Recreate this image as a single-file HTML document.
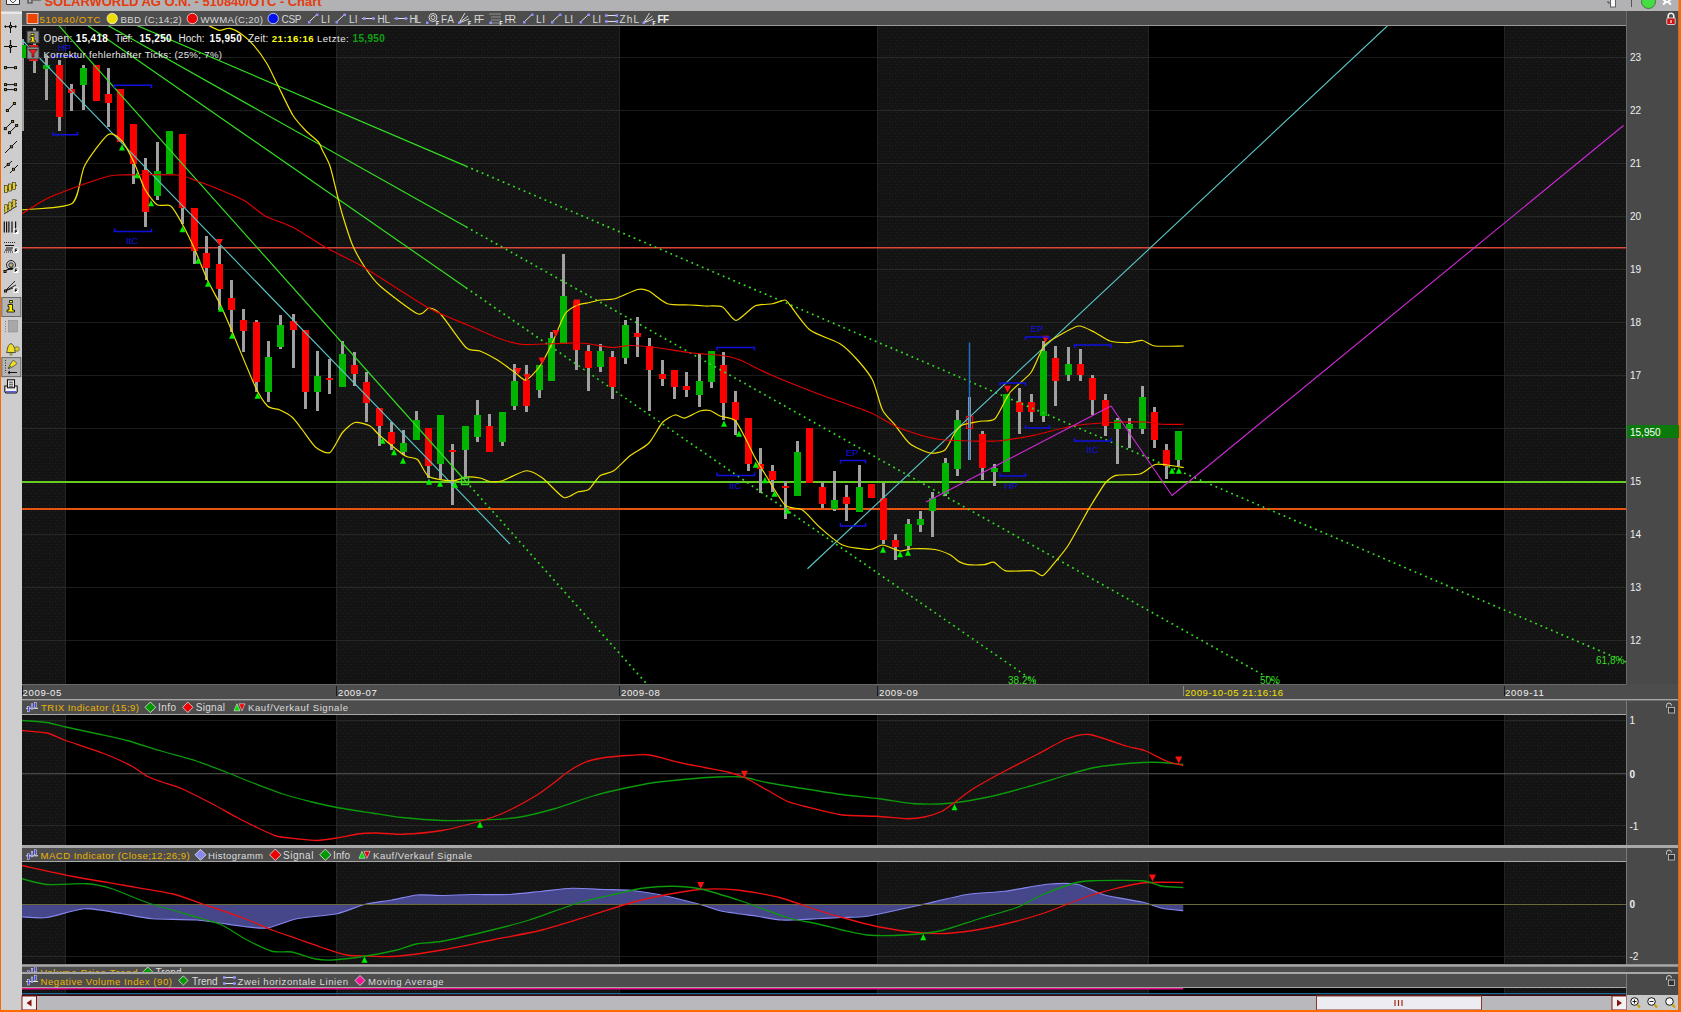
<!DOCTYPE html>
<html><head><meta charset="utf-8"><style>
html,body{margin:0;padding:0;background:#000;width:1681px;height:1012px;overflow:hidden}
svg text{font-family:"Liberation Sans",sans-serif}
</style></head><body>
<svg width="1681" height="1012" viewBox="0 0 1681 1012" style="display:block" font-family="Liberation Sans, sans-serif">
<defs><pattern id="dots" width="6" height="6" patternUnits="userSpaceOnUse"><rect width="6" height="6" fill="#131313"/><rect x="1" y="1" width="1" height="1" fill="#1e261e"/><rect x="4" y="1" width="1" height="1" fill="#1e1a20"/><rect x="2.5" y="4" width="1" height="1" fill="#1e261e"/><rect x="5.5" y="4" width="1" height="1" fill="#1e1a20"/></pattern><clipPath id="mainclip"><rect x="22" y="26" width="1604" height="658"/></clipPath><clipPath id="trixclip"><rect x="22" y="715" width="1604" height="130"/></clipPath><clipPath id="macdclip"><rect x="22" y="862" width="1604" height="102.3"/></clipPath></defs>
<rect x="0" y="0" width="1681" height="1012" fill="#7a7a7a" />
<rect x="0" y="0" width="1681" height="11" fill="#b2b2b4" />
<rect x="0" y="11" width="22" height="1001" fill="#cdcdcd" />
<rect x="0" y="0" width="1" height="1012" fill="#ff6a00" />
<rect x="1678.6" y="0" width="2.4" height="1012" fill="#ff6a00" />
<text x="44.5" y="5.5" fill="#e23c10" font-size="13" font-weight="bold" textLength="277" lengthAdjust="spacing">SOLARWORLD AG O.N. - 510840/OTC - Chart</text>
<path d="M6.5 -1 V4.5 H19.5 V-1" fill="#f4f4f4" stroke="#333" stroke-width="1"/>
<path d="M10 0 L13 3 L16 0" fill="none" stroke="#555" stroke-width="1"/>
<path d="M28 -1 V3 H32 V-1 M33 0 H41" fill="none" stroke="#444" stroke-width="1.2"/>
<rect x="1610.5" y="-1" width="5" height="8" fill="#f8f8f8" stroke="#444" stroke-width="0.8"/>
<path d="M1608 1 L1608 3 L1610 3" fill="none" stroke="#333" stroke-width="0.8"/>
<rect x="1631" y="0" width="1" height="7" fill="#555" />
<circle cx="1648.5" cy="1.5" r="7" fill="#44dd44" stroke="#2a6a2a" stroke-width="0.8"/>
<path d="M1663 -1 L1666 2 L1663 4.5 M1671 -1 L1668 2 L1671 4.5" fill="none" stroke="#fff" stroke-width="2"/>
<rect x="22" y="11" width="1604" height="14" fill="#4d4d4d" />
<rect x="22" y="25" width="1604" height="1" fill="#9a9a9a" />
<rect x="27" y="13.5" width="11" height="10" fill="#ee4400" stroke="#fff" stroke-width="0.7"/>
<text x="39.6" y="22.5" fill="#f0a800" font-size="9.6" font-weight="normal" textLength="60.8" lengthAdjust="spacing">510840/OTC</text>
<circle cx="112.2" cy="18.5" r="5.2" fill="#eedd00" stroke="#fff" stroke-width="0.7"/>
<text x="120.4" y="22.5" fill="#d8d8d8" font-size="9.6" font-weight="normal" textLength="61.2" lengthAdjust="spacing">BBD (C;14;2)</text>
<circle cx="192.3" cy="18.5" r="5.2" fill="#ee0000" stroke="#fff" stroke-width="0.7"/>
<text x="200.4" y="22.5" fill="#d8d8d8" font-size="9.6" font-weight="normal" textLength="62.5" lengthAdjust="spacing">WWMA(C;20)</text>
<circle cx="273.2" cy="18.5" r="5.2" fill="#0010ee" stroke="#fff" stroke-width="0.7"/>
<text x="281.6" y="22.5" fill="#d8d8d8" font-size="10" font-weight="normal" textLength="19.7" lengthAdjust="spacing">CSP</text>
<path d="M308.9 22 L316.9 14.5" stroke="#e0e0e0" stroke-width="1"/>
<rect x="307.9" y="21" width="2.5" height="2.5" fill="#9090ff" />
<rect x="315.9" y="13.5" width="2.5" height="2.5" fill="#9090ff" />
<path d="M336.5 22 L344.5 14.5" stroke="#e0e0e0" stroke-width="1"/>
<rect x="335.5" y="21" width="2.5" height="2.5" fill="#9090ff" />
<rect x="343.5" y="13.5" width="2.5" height="2.5" fill="#9090ff" />
<text x="321" y="22.5" fill="#d8d8d8" font-size="10" font-weight="normal" textLength="9" lengthAdjust="spacing">LI</text>
<text x="349" y="22.5" fill="#d8d8d8" font-size="10" font-weight="normal" textLength="8.5" lengthAdjust="spacing">LI</text>
<path d="M362 18.5 H375" stroke="#e0e0e0" stroke-width="1"/>
<rect x="363" y="17.2" width="2.6" height="2.6" fill="#9090ff" />
<rect x="372" y="17.2" width="2.6" height="2.6" fill="#9090ff" />
<text x="377.5" y="22.5" fill="#d8d8d8" font-size="10" font-weight="normal" textLength="12.5" lengthAdjust="spacing">HL</text>
<path d="M394.5 18.5 H407.5" stroke="#e0e0e0" stroke-width="1"/>
<rect x="395.5" y="17.2" width="2.6" height="2.6" fill="#9090ff" />
<rect x="404.5" y="17.2" width="2.6" height="2.6" fill="#9090ff" />
<text x="409.5" y="22.5" fill="#d8d8d8" font-size="10" font-weight="normal" textLength="11.5" lengthAdjust="spacing">HL</text>
<circle cx="433" cy="17.5" r="4" fill="none" stroke="#d8d8d8" stroke-width="1"/><circle cx="433" cy="17.5" r="2" fill="none" stroke="#d8d8d8" stroke-width="1"/>
<rect x="426" y="21.5" width="2.5" height="2.5" fill="#9090ff" />
<text x="436" y="24.5" fill="#ffffff" font-size="5" font-weight="bold" textLength="3.5" lengthAdjust="spacing">F</text>
<text x="441" y="22.5" fill="#d8d8d8" font-size="10" font-weight="normal" textLength="13" lengthAdjust="spacing">FA</text>
<path d="M459 23 L465 13 M459 23 L468 16 M459 23 L469 19" stroke="#d8d8d8" stroke-width="1"/>
<rect x="458" y="21.5" width="2.5" height="2.5" fill="#9090ff" />
<text x="468" y="24.5" fill="#ffffff" font-size="5" font-weight="bold" textLength="3.5" lengthAdjust="spacing">F</text>
<text x="474" y="22.5" fill="#d8d8d8" font-size="10" font-weight="normal" textLength="10" lengthAdjust="spacing">FF</text>
<path d="M489.5 14 H501.5 M491.5 17 H500.5 M491.5 20 H500.5 M489.5 23 H501.5" stroke="#d8d8d8" stroke-width="1" stroke-dasharray="1,1"/>
<rect x="489.5" y="21.5" width="2.5" height="2.5" fill="#9090ff" />
<text x="499.5" y="24.5" fill="#ffffff" font-size="5" font-weight="bold" textLength="3.5" lengthAdjust="spacing">F</text>
<text x="504.5" y="22.5" fill="#d8d8d8" font-size="10" font-weight="normal" textLength="11.5" lengthAdjust="spacing">FR</text>
<path d="M524 22 L532 14.5" stroke="#e0e0e0" stroke-width="1"/>
<rect x="523" y="21" width="2.5" height="2.5" fill="#9090ff" />
<rect x="531" y="13.5" width="2.5" height="2.5" fill="#9090ff" />
<text x="536" y="22.5" fill="#d8d8d8" font-size="10" font-weight="normal" textLength="9" lengthAdjust="spacing">LI</text>
<path d="M552 22 L560 14.5" stroke="#e0e0e0" stroke-width="1"/>
<rect x="551" y="21" width="2.5" height="2.5" fill="#9090ff" />
<rect x="559" y="13.5" width="2.5" height="2.5" fill="#9090ff" />
<text x="564.5" y="22.5" fill="#d8d8d8" font-size="10" font-weight="normal" textLength="8.5" lengthAdjust="spacing">LI</text>
<path d="M580.5 22 L588.5 14.5" stroke="#e0e0e0" stroke-width="1"/>
<rect x="579.5" y="21" width="2.5" height="2.5" fill="#9090ff" />
<rect x="587.5" y="13.5" width="2.5" height="2.5" fill="#9090ff" />
<text x="592.5" y="22.5" fill="#d8d8d8" font-size="10" font-weight="normal" textLength="8.5" lengthAdjust="spacing">LI</text>
<path d="M605 15.5 H618 M605 21.5 H618" stroke="#e0e0e0" stroke-width="1"/>
<rect x="605" y="14.2" width="2.6" height="2.6" fill="#9090ff" />
<rect x="615.5" y="14.2" width="2.6" height="2.6" fill="#9090ff" />
<rect x="605" y="20.2" width="2.6" height="2.6" fill="#9090ff" />
<rect x="615.5" y="20.2" width="2.6" height="2.6" fill="#9090ff" />
<text x="619.5" y="22.5" fill="#d8d8d8" font-size="10" font-weight="normal" textLength="19.5" lengthAdjust="spacing">ZhL</text>
<path d="M643.5 23 L649.5 13 M643.5 23 L652.5 16 M643.5 23 L653.5 19" stroke="#d8d8d8" stroke-width="1"/>
<rect x="642.5" y="21.5" width="2.5" height="2.5" fill="#9090ff" />
<text x="652.5" y="24.5" fill="#ffffff" font-size="5" font-weight="bold" textLength="3.5" lengthAdjust="spacing">F</text>
<text x="657.5" y="22.5" fill="#f0f0f0" font-size="10" font-weight="bold" textLength="11.5" lengthAdjust="spacing">FF</text>
<rect x="1" y="12" width="21" height="2" fill="#e8e8e8" />
<path d="M10.5 22 V33 M5 26.6 H16" stroke="#111" stroke-width="1"/>
<path d="M4 26.6 L6 25 V28.2 Z M17 26.6 L15 25 V28.2 Z" fill="#111"/>
<rect x="9" y="25.1" width="3" height="3" fill="#111" />
<rect x="10" y="26.1" width="1" height="1" fill="#c8a020" />
<path d="M10.5 40 V53 M4 46.5 H17" stroke="#111" stroke-width="1.2"/>
<rect x="9" y="45" width="3" height="3" fill="#111" />
<rect x="10" y="46" width="1" height="1" fill="#c8a020" />
<path d="M5 67.6 H16" stroke="#111" stroke-width="1"/>
<rect x="4" y="66.1" width="3" height="3" fill="#111" />
<rect x="5" y="67.1" width="1" height="1" fill="#c8a020" />
<rect x="14" y="66.1" width="3" height="3" fill="#111" />
<rect x="15" y="67.1" width="1" height="1" fill="#c8a020" />
<path d="M5 84.6 H16 M5 89.6 H16" stroke="#111" stroke-width="1"/>
<rect x="4" y="83.1" width="3" height="3" fill="#111" />
<rect x="5" y="84.1" width="1" height="1" fill="#c8a020" />
<rect x="14" y="83.1" width="3" height="3" fill="#111" />
<rect x="15" y="84.1" width="1" height="1" fill="#c8a020" />
<rect x="4" y="88.1" width="3" height="3" fill="#111" />
<rect x="5" y="89.1" width="1" height="1" fill="#c8a020" />
<rect x="14" y="88.1" width="3" height="3" fill="#111" />
<rect x="15" y="89.1" width="1" height="1" fill="#c8a020" />
<path d="M7.4 110.5 L14.4 103.5" stroke="#111" stroke-width="1"/>
<rect x="5.9" y="109" width="3" height="3" fill="#111" />
<rect x="6.9" y="110" width="1" height="1" fill="#c8a020" />
<rect x="12.9" y="102" width="3" height="3" fill="#111" />
<rect x="13.9" y="103" width="1" height="1" fill="#c8a020" />
<path d="M5.3 128.6 L12.6 121.5 M9.5 132.6 L16.6 125.5" stroke="#111" stroke-width="1"/>
<rect x="3.8" y="127.1" width="3" height="3" fill="#111" />
<rect x="4.8" y="128.1" width="1" height="1" fill="#c8a020" />
<rect x="11.1" y="120" width="3" height="3" fill="#111" />
<rect x="12.1" y="121" width="1" height="1" fill="#c8a020" />
<rect x="8" y="131.1" width="3" height="3" fill="#111" />
<rect x="9" y="132.1" width="1" height="1" fill="#c8a020" />
<rect x="15.1" y="124" width="3" height="3" fill="#111" />
<rect x="16.1" y="125" width="1" height="1" fill="#c8a020" />
<path d="M5 153 L17 141" stroke="#111" stroke-width="1"/>
<rect x="9.9" y="145.3" width="3" height="3" fill="#111" />
<rect x="10.9" y="146.3" width="1" height="1" fill="#c8a020" />
<path d="M4 168 L12 161 M10 173 L18 165" stroke="#111" stroke-width="1"/>
<rect x="6.8" y="163" width="3" height="3" fill="#111" />
<rect x="7.8" y="164" width="1" height="1" fill="#c8a020" />
<rect x="12" y="167.8" width="3" height="3" fill="#111" />
<rect x="13" y="168.8" width="1" height="1" fill="#c8a020" />
<path d="M4 191 L17 185" stroke="#111" stroke-width="1"/>
<rect x="4.5" y="185.5" width="3" height="7" fill="#e8d020" stroke="#222" stroke-width="0.6"/>
<rect x="8.5" y="184" width="3" height="7" fill="#e8d020" stroke="#222" stroke-width="0.6"/>
<rect x="12.5" y="182.5" width="3" height="7" fill="#e8d020" stroke="#222" stroke-width="0.6"/>
<path d="M4 211 L17 203 M4 208 L17 200 M4 214 L17 206" stroke="#111" stroke-width="0.8"/>
<rect x="4.8" y="204.5" width="2.4" height="8" fill="#e8d020" stroke="#222" stroke-width="0.5"/>
<rect x="8.8" y="202" width="2.4" height="8" fill="#e8d020" stroke="#222" stroke-width="0.5"/>
<rect x="12.8" y="199.5" width="2.4" height="8" fill="#e8d020" stroke="#222" stroke-width="0.5"/>
<path d="M4.3 221.5 V232.5 M6.6 221.5 V232.5 M8.9 221.5 V232.5 M12 221.5 V232.5 M15.6 221.5 V229" stroke="#111" stroke-width="1.2"/>
<rect x="13.5" y="228.5" width="5" height="5.5" fill="#fff" />
<path d="M15.2 233 V229.8 M15.2 230 H17.5 M15.2 231.5 H17" stroke="#000" stroke-width="0.9"/>
<path d="M4 242.5 H16 M4 252 H16" stroke="#111" stroke-width="0.9" stroke-dasharray="1,1"/>
<path d="M5 245.5 H14 M6 248 H13 M5 250 H12" stroke="#111" stroke-width="1"/>
<rect x="13.5" y="247.5" width="5" height="5.5" fill="#fff" />
<path d="M15.2 252 V248.8 M15.2 249 H17.5 M15.2 250.5 H17" stroke="#000" stroke-width="0.9"/>
<circle cx="11" cy="265" r="4.5" fill="none" stroke="#111" stroke-width="0.9"/><circle cx="11" cy="265" r="2.2" fill="none" stroke="#111" stroke-width="0.9"/>
<rect x="10.2" y="264.2" width="1.6" height="1.6" fill="#c8a020" />
<path d="M5 271 L10 268 H15" stroke="#111" stroke-width="0.9"/>
<rect x="3.5" y="270" width="3" height="3" fill="#111" />
<rect x="4.5" y="271" width="1" height="1" fill="#c8a020" />
<rect x="13.5" y="267.5" width="5" height="5.5" fill="#fff" />
<path d="M15.2 272 V268.8 M15.2 269 H17.5 M15.2 270.5 H17" stroke="#000" stroke-width="0.9"/>
<path d="M5 291 L15 281 M5 291 L16 285 M5 291 L13 288" stroke="#111" stroke-width="0.9"/>
<rect x="4" y="289.5" width="3" height="3" fill="#111" />
<rect x="5" y="290.5" width="1" height="1" fill="#c8a020" />
<rect x="13.5" y="287.5" width="5" height="5.5" fill="#fff" />
<path d="M15.2 292 V288.8 M15.2 289 H17.5 M15.2 290.5 H17" stroke="#000" stroke-width="0.9"/>
<rect x="1.8" y="297.5" width="19" height="19" fill="#b4b4b4" stroke="#6a6a6a" stroke-width="1"/>
<path d="M9.5 300.5 h3 v2.3 h-3 z M8 304.5 h4.5 v5.5 h2 v2 h-7.5 v-2 h2 v-3.5 h-1 z" fill="#ffee00" stroke="#000" stroke-width="0.8"/>
<path d="M5.5 321 V333" stroke="#777" stroke-width="1" stroke-dasharray="1,1.5"/>
<rect x="8.5" y="320.5" width="9" height="11.5" fill="#a8a8a8" stroke="#8a8a8a" stroke-width="0.6"/>
<path d="M6.5 352.5 C7.5 351 7 345 11 343.5 C15 345 14.5 351 15.5 352.5 Z" fill="#eedd22" stroke="#333" stroke-width="0.8"/>
<circle cx="11" cy="354" r="1.2" fill="#eedd22" stroke="#333" stroke-width="0.5"/>
<path d="M14.5 349 H19.5 M17 346.5 V351.5" stroke="#333" stroke-width="2.6"/><path d="M14.5 349 H19.5 M17 346.5 V351.5" stroke="#eedd22" stroke-width="1.4"/>
<rect x="1.8" y="357.6" width="19" height="19" fill="#b4b4b4" stroke="#6a6a6a" stroke-width="1"/>
<path d="M5.5 360 V373" stroke="#333" stroke-width="1" stroke-dasharray="1,1.5"/>
<path d="M8.5 367.5 L11 363 L13.5 360 L17 363.5 L14 366 L9.5 368.5 Z" fill="#eedd22" stroke="#333" stroke-width="0.7"/><path d="M8 369 L11 366" stroke="#333" stroke-width="0.8"/><path d="M8 372.5 H17 M8 372.5 L10 371 M8 372.5 L10 374" stroke="#111" stroke-width="1"/>
<path d="M4.8 386 H17.2 V391.5 L16 393 H6 L4.8 391.5 Z" fill="#f4f4f4" stroke="#111" stroke-width="1.1"/>
<rect x="6" y="391.2" width="10" height="1.3" fill="#3a3acc" />
<rect x="7.5" y="379.8" width="7" height="8" fill="#f8f8f8" stroke="#111" stroke-width="1.1"/>
<path d="M9 382.2 H13 M9 384.2 H13 M9 386.2 H13" stroke="#222" stroke-width="0.9"/>
<rect x="22" y="26" width="1604" height="658" fill="#000" />
<rect x="22" y="26" width="44" height="658" fill="url(#dots)" />
<rect x="65" y="26" width="1" height="658" fill="#232823" opacity="0.9"/>
<rect x="336" y="26" width="284" height="658" fill="url(#dots)" />
<rect x="336" y="26" width="1" height="658" fill="#232823" opacity="0.9"/>
<rect x="619" y="26" width="1" height="658" fill="#232823" opacity="0.9"/>
<rect x="877" y="26" width="272" height="658" fill="url(#dots)" />
<rect x="877" y="26" width="1" height="658" fill="#232823" opacity="0.9"/>
<rect x="1148" y="26" width="1" height="658" fill="#232823" opacity="0.9"/>
<rect x="1504" y="26" width="122" height="658" fill="url(#dots)" />
<rect x="1504" y="26" width="1" height="658" fill="#232823" opacity="0.9"/>
<rect x="1626" y="11" width="52" height="673" fill="#494949" />
<rect x="1626" y="11" width="1" height="674" fill="#6a6a6a" />
<line x1="22" y1="640.5" x2="66" y2="640.5" stroke="#262a26" stroke-width="1" />
<line x1="66" y1="640.5" x2="336" y2="640.5" stroke="#1c1c1c" stroke-width="1" />
<line x1="336" y1="640.5" x2="620" y2="640.5" stroke="#262a26" stroke-width="1" />
<line x1="620" y1="640.5" x2="877" y2="640.5" stroke="#1c1c1c" stroke-width="1" />
<line x1="877" y1="640.5" x2="1149" y2="640.5" stroke="#262a26" stroke-width="1" />
<line x1="1149" y1="640.5" x2="1504" y2="640.5" stroke="#1c1c1c" stroke-width="1" />
<line x1="1504" y1="640.5" x2="1626" y2="640.5" stroke="#262a26" stroke-width="1" />
<line x1="22" y1="587.5" x2="66" y2="587.5" stroke="#262a26" stroke-width="1" />
<line x1="66" y1="587.5" x2="336" y2="587.5" stroke="#1c1c1c" stroke-width="1" />
<line x1="336" y1="587.5" x2="620" y2="587.5" stroke="#262a26" stroke-width="1" />
<line x1="620" y1="587.5" x2="877" y2="587.5" stroke="#1c1c1c" stroke-width="1" />
<line x1="877" y1="587.5" x2="1149" y2="587.5" stroke="#262a26" stroke-width="1" />
<line x1="1149" y1="587.5" x2="1504" y2="587.5" stroke="#1c1c1c" stroke-width="1" />
<line x1="1504" y1="587.5" x2="1626" y2="587.5" stroke="#262a26" stroke-width="1" />
<line x1="22" y1="534.5" x2="66" y2="534.5" stroke="#262a26" stroke-width="1" />
<line x1="66" y1="534.5" x2="336" y2="534.5" stroke="#1c1c1c" stroke-width="1" />
<line x1="336" y1="534.5" x2="620" y2="534.5" stroke="#262a26" stroke-width="1" />
<line x1="620" y1="534.5" x2="877" y2="534.5" stroke="#1c1c1c" stroke-width="1" />
<line x1="877" y1="534.5" x2="1149" y2="534.5" stroke="#262a26" stroke-width="1" />
<line x1="1149" y1="534.5" x2="1504" y2="534.5" stroke="#1c1c1c" stroke-width="1" />
<line x1="1504" y1="534.5" x2="1626" y2="534.5" stroke="#262a26" stroke-width="1" />
<line x1="22" y1="481.5" x2="66" y2="481.5" stroke="#262a26" stroke-width="1" />
<line x1="66" y1="481.5" x2="336" y2="481.5" stroke="#1c1c1c" stroke-width="1" />
<line x1="336" y1="481.5" x2="620" y2="481.5" stroke="#262a26" stroke-width="1" />
<line x1="620" y1="481.5" x2="877" y2="481.5" stroke="#1c1c1c" stroke-width="1" />
<line x1="877" y1="481.5" x2="1149" y2="481.5" stroke="#262a26" stroke-width="1" />
<line x1="1149" y1="481.5" x2="1504" y2="481.5" stroke="#1c1c1c" stroke-width="1" />
<line x1="1504" y1="481.5" x2="1626" y2="481.5" stroke="#262a26" stroke-width="1" />
<line x1="22" y1="428.5" x2="66" y2="428.5" stroke="#262a26" stroke-width="1" />
<line x1="66" y1="428.5" x2="336" y2="428.5" stroke="#1c1c1c" stroke-width="1" />
<line x1="336" y1="428.5" x2="620" y2="428.5" stroke="#262a26" stroke-width="1" />
<line x1="620" y1="428.5" x2="877" y2="428.5" stroke="#1c1c1c" stroke-width="1" />
<line x1="877" y1="428.5" x2="1149" y2="428.5" stroke="#262a26" stroke-width="1" />
<line x1="1149" y1="428.5" x2="1504" y2="428.5" stroke="#1c1c1c" stroke-width="1" />
<line x1="1504" y1="428.5" x2="1626" y2="428.5" stroke="#262a26" stroke-width="1" />
<line x1="22" y1="375.5" x2="66" y2="375.5" stroke="#262a26" stroke-width="1" />
<line x1="66" y1="375.5" x2="336" y2="375.5" stroke="#1c1c1c" stroke-width="1" />
<line x1="336" y1="375.5" x2="620" y2="375.5" stroke="#262a26" stroke-width="1" />
<line x1="620" y1="375.5" x2="877" y2="375.5" stroke="#1c1c1c" stroke-width="1" />
<line x1="877" y1="375.5" x2="1149" y2="375.5" stroke="#262a26" stroke-width="1" />
<line x1="1149" y1="375.5" x2="1504" y2="375.5" stroke="#1c1c1c" stroke-width="1" />
<line x1="1504" y1="375.5" x2="1626" y2="375.5" stroke="#262a26" stroke-width="1" />
<line x1="22" y1="322.5" x2="66" y2="322.5" stroke="#262a26" stroke-width="1" />
<line x1="66" y1="322.5" x2="336" y2="322.5" stroke="#1c1c1c" stroke-width="1" />
<line x1="336" y1="322.5" x2="620" y2="322.5" stroke="#262a26" stroke-width="1" />
<line x1="620" y1="322.5" x2="877" y2="322.5" stroke="#1c1c1c" stroke-width="1" />
<line x1="877" y1="322.5" x2="1149" y2="322.5" stroke="#262a26" stroke-width="1" />
<line x1="1149" y1="322.5" x2="1504" y2="322.5" stroke="#1c1c1c" stroke-width="1" />
<line x1="1504" y1="322.5" x2="1626" y2="322.5" stroke="#262a26" stroke-width="1" />
<line x1="22" y1="269.5" x2="66" y2="269.5" stroke="#262a26" stroke-width="1" />
<line x1="66" y1="269.5" x2="336" y2="269.5" stroke="#1c1c1c" stroke-width="1" />
<line x1="336" y1="269.5" x2="620" y2="269.5" stroke="#262a26" stroke-width="1" />
<line x1="620" y1="269.5" x2="877" y2="269.5" stroke="#1c1c1c" stroke-width="1" />
<line x1="877" y1="269.5" x2="1149" y2="269.5" stroke="#262a26" stroke-width="1" />
<line x1="1149" y1="269.5" x2="1504" y2="269.5" stroke="#1c1c1c" stroke-width="1" />
<line x1="1504" y1="269.5" x2="1626" y2="269.5" stroke="#262a26" stroke-width="1" />
<line x1="22" y1="216.5" x2="66" y2="216.5" stroke="#262a26" stroke-width="1" />
<line x1="66" y1="216.5" x2="336" y2="216.5" stroke="#1c1c1c" stroke-width="1" />
<line x1="336" y1="216.5" x2="620" y2="216.5" stroke="#262a26" stroke-width="1" />
<line x1="620" y1="216.5" x2="877" y2="216.5" stroke="#1c1c1c" stroke-width="1" />
<line x1="877" y1="216.5" x2="1149" y2="216.5" stroke="#262a26" stroke-width="1" />
<line x1="1149" y1="216.5" x2="1504" y2="216.5" stroke="#1c1c1c" stroke-width="1" />
<line x1="1504" y1="216.5" x2="1626" y2="216.5" stroke="#262a26" stroke-width="1" />
<line x1="22" y1="163.5" x2="66" y2="163.5" stroke="#262a26" stroke-width="1" />
<line x1="66" y1="163.5" x2="336" y2="163.5" stroke="#1c1c1c" stroke-width="1" />
<line x1="336" y1="163.5" x2="620" y2="163.5" stroke="#262a26" stroke-width="1" />
<line x1="620" y1="163.5" x2="877" y2="163.5" stroke="#1c1c1c" stroke-width="1" />
<line x1="877" y1="163.5" x2="1149" y2="163.5" stroke="#262a26" stroke-width="1" />
<line x1="1149" y1="163.5" x2="1504" y2="163.5" stroke="#1c1c1c" stroke-width="1" />
<line x1="1504" y1="163.5" x2="1626" y2="163.5" stroke="#262a26" stroke-width="1" />
<line x1="22" y1="110.5" x2="66" y2="110.5" stroke="#262a26" stroke-width="1" />
<line x1="66" y1="110.5" x2="336" y2="110.5" stroke="#1c1c1c" stroke-width="1" />
<line x1="336" y1="110.5" x2="620" y2="110.5" stroke="#262a26" stroke-width="1" />
<line x1="620" y1="110.5" x2="877" y2="110.5" stroke="#1c1c1c" stroke-width="1" />
<line x1="877" y1="110.5" x2="1149" y2="110.5" stroke="#262a26" stroke-width="1" />
<line x1="1149" y1="110.5" x2="1504" y2="110.5" stroke="#1c1c1c" stroke-width="1" />
<line x1="1504" y1="110.5" x2="1626" y2="110.5" stroke="#262a26" stroke-width="1" />
<line x1="22" y1="57.5" x2="66" y2="57.5" stroke="#262a26" stroke-width="1" />
<line x1="66" y1="57.5" x2="336" y2="57.5" stroke="#1c1c1c" stroke-width="1" />
<line x1="336" y1="57.5" x2="620" y2="57.5" stroke="#262a26" stroke-width="1" />
<line x1="620" y1="57.5" x2="877" y2="57.5" stroke="#1c1c1c" stroke-width="1" />
<line x1="877" y1="57.5" x2="1149" y2="57.5" stroke="#262a26" stroke-width="1" />
<line x1="1149" y1="57.5" x2="1504" y2="57.5" stroke="#1c1c1c" stroke-width="1" />
<line x1="1504" y1="57.5" x2="1626" y2="57.5" stroke="#262a26" stroke-width="1" />
<g clip-path="url(#mainclip)">
<line x1="22" y1="247.75" x2="1626" y2="247.75" stroke="#dc4838" stroke-width="1.6" />
<line x1="22" y1="482" x2="1626" y2="482" stroke="#66cc22" stroke-width="2" />
<line x1="22" y1="509" x2="1626" y2="509" stroke="#e85410" stroke-width="2" />
<rect x="21" y="39" width="3" height="92" fill="#a0a0a0" />
<rect x="19" y="45" width="7" height="13" fill="#00b400" />
<rect x="33" y="28" width="3" height="45" fill="#a0a0a0" />
<rect x="31" y="45" width="7" height="16" fill="#ff0000" />
<rect x="45" y="56" width="3" height="44" fill="#a0a0a0" />
<rect x="43" y="65" width="7" height="4" fill="#00b400" />
<rect x="58" y="60" width="3" height="71" fill="#a0a0a0" />
<rect x="56" y="65" width="7" height="52" fill="#ff0000" />
<rect x="70" y="84" width="3" height="27" fill="#a0a0a0" />
<rect x="68" y="89" width="7" height="4" fill="#ff0000" />
<rect x="82" y="65" width="3" height="45" fill="#a0a0a0" />
<rect x="80" y="68" width="7" height="17" fill="#00b400" />
<rect x="95" y="65" width="3" height="36" fill="#a0a0a0" />
<rect x="93" y="65" width="7" height="36" fill="#ff0000" />
<rect x="107" y="68" width="3" height="59" fill="#a0a0a0" />
<rect x="105" y="94" width="7" height="9" fill="#ff0000" />
<rect x="119" y="89" width="3" height="53" fill="#a0a0a0" />
<rect x="117" y="89" width="7" height="53" fill="#ff0000" />
<rect x="132" y="124" width="3" height="60" fill="#a0a0a0" />
<rect x="130" y="124" width="7" height="40" fill="#ff0000" />
<rect x="144" y="158" width="3" height="69" fill="#a0a0a0" />
<rect x="142" y="170" width="7" height="42" fill="#ff0000" />
<rect x="156" y="142" width="3" height="58" fill="#a0a0a0" />
<rect x="154" y="171" width="7" height="25" fill="#00b400" />
<rect x="168" y="131" width="3" height="43" fill="#a0a0a0" />
<rect x="166" y="131" width="7" height="43" fill="#00b400" />
<rect x="181" y="134" width="3" height="90" fill="#a0a0a0" />
<rect x="179" y="134" width="7" height="74" fill="#ff0000" />
<rect x="193" y="208" width="3" height="56" fill="#a0a0a0" />
<rect x="191" y="208" width="7" height="43" fill="#ff0000" />
<rect x="205" y="236" width="3" height="44" fill="#a0a0a0" />
<rect x="203" y="253" width="7" height="15" fill="#ff0000" />
<rect x="218" y="246" width="3" height="64" fill="#a0a0a0" />
<rect x="216" y="264" width="7" height="25" fill="#ff0000" />
<rect x="230" y="280" width="3" height="52" fill="#a0a0a0" />
<rect x="228" y="298" width="7" height="12" fill="#ff0000" />
<rect x="242" y="309" width="3" height="43" fill="#a0a0a0" />
<rect x="240" y="320" width="7" height="11" fill="#ff0000" />
<rect x="255" y="320" width="3" height="72" fill="#a0a0a0" />
<rect x="253" y="322" width="7" height="60" fill="#ff0000" />
<rect x="267" y="341" width="3" height="61" fill="#a0a0a0" />
<rect x="265" y="357" width="7" height="35" fill="#00b400" />
<rect x="279" y="315" width="3" height="34" fill="#a0a0a0" />
<rect x="277" y="325" width="7" height="22" fill="#00b400" />
<rect x="292" y="314" width="3" height="54" fill="#a0a0a0" />
<rect x="290" y="321" width="7" height="9" fill="#ff0000" />
<rect x="304" y="330" width="3" height="79" fill="#a0a0a0" />
<rect x="302" y="330" width="7" height="62" fill="#ff0000" />
<rect x="316" y="351" width="3" height="60" fill="#a0a0a0" />
<rect x="314" y="376" width="7" height="16" fill="#00b400" />
<rect x="328" y="359" width="3" height="35" fill="#a0a0a0" />
<rect x="326" y="378" width="7" height="2" fill="#ff0000" />
<rect x="341" y="341" width="3" height="46" fill="#a0a0a0" />
<rect x="339" y="354" width="7" height="33" fill="#00b400" />
<rect x="353" y="352" width="3" height="34" fill="#a0a0a0" />
<rect x="351" y="365" width="7" height="9" fill="#ff0000" />
<rect x="365" y="372" width="3" height="50" fill="#a0a0a0" />
<rect x="363" y="382" width="7" height="21" fill="#ff0000" />
<rect x="378" y="408" width="3" height="38" fill="#a0a0a0" />
<rect x="376" y="408" width="7" height="18" fill="#ff0000" />
<rect x="390" y="422" width="3" height="28" fill="#a0a0a0" />
<rect x="388" y="432" width="7" height="12" fill="#ff0000" />
<rect x="402" y="430" width="3" height="25" fill="#a0a0a0" />
<rect x="400" y="443" width="7" height="9" fill="#00b400" />
<rect x="415" y="411" width="3" height="29" fill="#a0a0a0" />
<rect x="413" y="420" width="7" height="20" fill="#00b400" />
<rect x="427" y="428" width="3" height="50" fill="#a0a0a0" />
<rect x="425" y="428" width="7" height="38" fill="#ff0000" />
<rect x="439" y="415" width="3" height="64" fill="#a0a0a0" />
<rect x="437" y="415" width="7" height="49" fill="#00b400" />
<rect x="451" y="444" width="3" height="61" fill="#a0a0a0" />
<rect x="449" y="450" width="7" height="2" fill="#ff0000" />
<rect x="464" y="426" width="3" height="53" fill="#a0a0a0" />
<rect x="462" y="426" width="7" height="24" fill="#00b400" />
<rect x="476" y="400" width="3" height="42" fill="#a0a0a0" />
<rect x="474" y="415" width="7" height="22" fill="#00b400" />
<rect x="488" y="414" width="3" height="38" fill="#a0a0a0" />
<rect x="486" y="426" width="7" height="26" fill="#ff0000" />
<rect x="501" y="412" width="3" height="34" fill="#a0a0a0" />
<rect x="499" y="412" width="7" height="30" fill="#00b400" />
<rect x="513" y="364" width="3" height="46" fill="#a0a0a0" />
<rect x="511" y="381" width="7" height="25" fill="#00b400" />
<rect x="525" y="365" width="3" height="47" fill="#a0a0a0" />
<rect x="523" y="380" width="7" height="26" fill="#ff0000" />
<rect x="538" y="365" width="3" height="33" fill="#a0a0a0" />
<rect x="536" y="365" width="7" height="25" fill="#00b400" />
<rect x="550" y="332" width="3" height="49" fill="#a0a0a0" />
<rect x="548" y="338" width="7" height="43" fill="#00b400" />
<rect x="562" y="254" width="3" height="90" fill="#a0a0a0" />
<rect x="560" y="296" width="7" height="48" fill="#00b400" />
<rect x="575" y="301" width="3" height="69" fill="#a0a0a0" />
<rect x="573" y="301" width="7" height="49" fill="#ff0000" />
<rect x="587" y="345" width="3" height="46" fill="#a0a0a0" />
<rect x="585" y="351" width="7" height="17" fill="#ff0000" />
<rect x="599" y="344" width="3" height="28" fill="#a0a0a0" />
<rect x="597" y="351" width="7" height="16" fill="#00b400" />
<rect x="611" y="351" width="3" height="48" fill="#a0a0a0" />
<rect x="609" y="357" width="7" height="30" fill="#ff0000" />
<rect x="624" y="320" width="3" height="44" fill="#a0a0a0" />
<rect x="622" y="325" width="7" height="33" fill="#00b400" />
<rect x="636" y="317" width="3" height="40" fill="#a0a0a0" />
<rect x="634" y="333" width="7" height="4" fill="#ff0000" />
<rect x="648" y="338" width="3" height="73" fill="#a0a0a0" />
<rect x="646" y="346" width="7" height="24" fill="#ff0000" />
<rect x="661" y="360" width="3" height="26" fill="#a0a0a0" />
<rect x="659" y="374" width="7" height="5" fill="#ff0000" />
<rect x="673" y="370" width="3" height="29" fill="#a0a0a0" />
<rect x="671" y="370" width="7" height="17" fill="#ff0000" />
<rect x="685" y="372" width="3" height="25" fill="#a0a0a0" />
<rect x="683" y="386" width="7" height="4" fill="#ff0000" />
<rect x="698" y="354" width="3" height="53" fill="#a0a0a0" />
<rect x="696" y="381" width="7" height="14" fill="#00b400" />
<rect x="710" y="351" width="3" height="37" fill="#a0a0a0" />
<rect x="708" y="351" width="7" height="31" fill="#00b400" />
<rect x="722" y="352" width="3" height="68" fill="#a0a0a0" />
<rect x="720" y="365" width="7" height="38" fill="#ff0000" />
<rect x="734" y="391" width="3" height="44" fill="#a0a0a0" />
<rect x="732" y="402" width="7" height="18" fill="#ff0000" />
<rect x="747" y="418" width="3" height="53" fill="#a0a0a0" />
<rect x="745" y="418" width="7" height="46" fill="#ff0000" />
<rect x="759" y="448" width="3" height="45" fill="#a0a0a0" />
<rect x="757" y="464" width="7" height="5" fill="#ff0000" />
<rect x="771" y="465" width="3" height="27" fill="#a0a0a0" />
<rect x="769" y="471" width="7" height="9" fill="#ff0000" />
<rect x="784" y="481" width="3" height="38" fill="#a0a0a0" />
<rect x="782" y="486" width="7" height="2" fill="#ff0000" />
<rect x="796" y="441" width="3" height="55" fill="#a0a0a0" />
<rect x="794" y="452" width="7" height="44" fill="#00b400" />
<rect x="808" y="428" width="3" height="55" fill="#a0a0a0" />
<rect x="806" y="428" width="7" height="55" fill="#ff0000" />
<rect x="821" y="482" width="3" height="26" fill="#a0a0a0" />
<rect x="819" y="487" width="7" height="17" fill="#ff0000" />
<rect x="833" y="471" width="3" height="40" fill="#a0a0a0" />
<rect x="831" y="500" width="7" height="9" fill="#00b400" />
<rect x="845" y="485" width="3" height="36" fill="#a0a0a0" />
<rect x="843" y="497" width="7" height="7" fill="#ff0000" />
<rect x="858" y="465" width="3" height="47" fill="#a0a0a0" />
<rect x="856" y="487" width="7" height="25" fill="#00b400" />
<rect x="870" y="484" width="3" height="14" fill="#a0a0a0" />
<rect x="868" y="484" width="7" height="14" fill="#ff0000" />
<rect x="882" y="483" width="3" height="61" fill="#a0a0a0" />
<rect x="880" y="498" width="7" height="42" fill="#ff0000" />
<rect x="894" y="534" width="3" height="26" fill="#a0a0a0" />
<rect x="892" y="540" width="7" height="7" fill="#ff0000" />
<rect x="907" y="519" width="3" height="31" fill="#a0a0a0" />
<rect x="905" y="524" width="7" height="22" fill="#00b400" />
<rect x="919" y="511" width="3" height="21" fill="#a0a0a0" />
<rect x="917" y="519" width="7" height="6" fill="#00b400" />
<rect x="931" y="492" width="3" height="45" fill="#a0a0a0" />
<rect x="929" y="498" width="7" height="13" fill="#00b400" />
<rect x="944" y="458" width="3" height="38" fill="#a0a0a0" />
<rect x="942" y="463" width="7" height="31" fill="#00b400" />
<rect x="956" y="410" width="3" height="66" fill="#a0a0a0" />
<rect x="954" y="420" width="7" height="49" fill="#00b400" />
<rect x="968" y="397" width="3" height="63" fill="#a0a0a0" />
<rect x="966.5" y="416.5" width="6" height="12" fill="none" stroke="#ff0000" stroke-width="1.2"/>
<rect x="981" y="431" width="3" height="49" fill="#a0a0a0" />
<rect x="979" y="434" width="7" height="34" fill="#ff0000" />
<rect x="993" y="464" width="3" height="22" fill="#a0a0a0" />
<rect x="991" y="468" width="7" height="4" fill="#00b400" />
<rect x="1005" y="394" width="3" height="78" fill="#a0a0a0" />
<rect x="1003" y="394" width="7" height="78" fill="#00b400" />
<rect x="1018" y="388" width="3" height="46" fill="#a0a0a0" />
<rect x="1016" y="402" width="7" height="10" fill="#ff0000" />
<rect x="1030" y="394" width="3" height="28" fill="#a0a0a0" />
<rect x="1028" y="402" width="7" height="10" fill="#ff0000" />
<rect x="1042" y="341" width="3" height="81" fill="#a0a0a0" />
<rect x="1040" y="351" width="7" height="65" fill="#00b400" />
<rect x="1054" y="346" width="3" height="60" fill="#a0a0a0" />
<rect x="1052" y="358" width="7" height="23" fill="#ff0000" />
<rect x="1067" y="347" width="3" height="34" fill="#a0a0a0" />
<rect x="1065" y="364" width="7" height="11" fill="#00b400" />
<rect x="1079" y="349" width="3" height="32" fill="#a0a0a0" />
<rect x="1077" y="364" width="7" height="11" fill="#ff0000" />
<rect x="1091" y="375" width="3" height="40" fill="#a0a0a0" />
<rect x="1089" y="378" width="7" height="22" fill="#ff0000" />
<rect x="1104" y="394" width="3" height="42" fill="#a0a0a0" />
<rect x="1102" y="400" width="7" height="26" fill="#ff0000" />
<rect x="1116" y="418" width="3" height="46" fill="#a0a0a0" />
<rect x="1114" y="420" width="7" height="9" fill="#00b400" />
<rect x="1128" y="418" width="3" height="30" fill="#a0a0a0" />
<rect x="1126" y="424" width="7" height="5" fill="#00b400" />
<rect x="1141" y="386" width="3" height="48" fill="#a0a0a0" />
<rect x="1139" y="397" width="7" height="32" fill="#00b400" />
<rect x="1153" y="407" width="3" height="41" fill="#a0a0a0" />
<rect x="1151" y="412" width="7" height="28" fill="#ff0000" />
<rect x="1165" y="444" width="3" height="35" fill="#a0a0a0" />
<rect x="1163" y="450" width="7" height="16" fill="#ff0000" />
<rect x="1177" y="431" width="3" height="35" fill="#a0a0a0" />
<rect x="1175" y="431" width="7" height="29" fill="#00b400" />
<line x1="22" y1="-23.64" x2="466" y2="166.16" stroke="#33dd22" stroke-width="1.2" />
<line x1="466" y1="166.16" x2="1626" y2="662.06" stroke="#33dd22" stroke-width="1.7" stroke-dasharray="1.8,3.9"/>
<line x1="22" y1="-22.82" x2="466" y2="226.8" stroke="#33dd22" stroke-width="1.2" />
<line x1="466" y1="226.8" x2="1279.23" y2="684" stroke="#33dd22" stroke-width="1.7" stroke-dasharray="1.8,3.9"/>
<line x1="22" y1="-19.96" x2="466" y2="287.73" stroke="#33dd22" stroke-width="1.2" />
<line x1="466" y1="287.73" x2="1037.82" y2="684" stroke="#33dd22" stroke-width="1.7" stroke-dasharray="1.8,3.9"/>
<line x1="22" y1="-15.76" x2="466" y2="481.52" stroke="#33dd22" stroke-width="1.2" />
<line x1="466" y1="481.52" x2="646.79" y2="684" stroke="#33dd22" stroke-width="1.7" stroke-dasharray="1.8,3.9"/>
<line x1="22" y1="40" x2="510" y2="544" stroke="#5cc8c8" stroke-width="1.1" />
<line x1="807.5" y1="568.75" x2="1387.25" y2="26" stroke="#5cc8c8" stroke-width="1.1" />
<path d="M208 25 C208.29 25.16 209.16 25.78 210.5 26.4 C211.84 27.02 217.25 30.08 219.5 30.3 C221.75 30.52 227.25 27.87 229.8 28.3 C232.36 28.73 238.58 31.97 241.4 34 C244.22 36.03 251.01 42.23 254 45.7 C256.99 49.17 264.28 59.21 267 63.7 C269.72 68.19 274.3 78.22 277.3 84.2 C280.3 90.19 289.4 109.6 292.7 115 C296 120.4 302.6 127.35 305.6 130.5 C308.6 133.65 316.45 139.72 318.4 142 C320.35 144.28 320.95 147.2 322.3 150 C323.65 152.8 328.23 160.63 330 166 C331.77 171.37 336.04 190.28 337.5 196 C338.96 201.72 340.75 209.28 342.5 215 C344.25 220.72 349.88 238.88 352.5 245 C355.12 251.12 361.79 262.72 365 267.5 C368.21 272.28 373.88 280.6 380 286 C386.12 291.4 411.78 311.18 417.5 313.75 C423.22 316.32 426.26 307.91 429 308 C431.74 308.09 436.68 309.89 441 314.5 C445.32 319.11 461.45 343.24 466 347.5 C470.55 351.76 476.32 349.54 480 351 C483.68 352.46 493.42 357.49 497.5 360 C501.58 362.51 511.68 370.17 515 372.5 C518.33 374.83 523.08 380.76 526 380 C528.92 379.24 536.91 370.38 540 366 C543.09 361.62 549.58 348.57 552.5 342.5 C555.42 336.43 562.08 318.38 565 314 C567.92 309.62 574.58 306.34 577.5 305 C580.42 303.66 587.38 303.08 590 302.5 C592.62 301.92 597.08 300.44 600 300 C602.92 299.56 610.62 299.98 615 298.75 C619.38 297.52 633.56 290.4 637.5 289.5 C641.44 288.6 645.25 289.34 648.75 291 C652.25 292.66 662.69 302.12 667.5 303.75 C672.31 305.38 685.62 304.74 690 305 C694.38 305.26 701.21 305.77 705 306 C708.79 306.23 718.88 305.31 722.5 307 C726.12 308.69 732.21 320.62 736 320.5 C739.79 320.38 750.74 307.95 755 306 C759.26 304.05 769 304.45 772.5 303.75 C776 303.05 782.96 299.85 785 300 C787.04 300.15 787.08 301.5 790 305 C792.92 308.5 804.17 325.48 810 330 C815.83 334.52 834.46 340.25 840 343.75 C845.54 347.25 853.71 355.77 857.5 360 C861.29 364.23 869.58 374.17 872.5 380 C875.42 385.83 879.88 404.75 882.5 410 C885.12 415.25 891.79 421.06 895 425 C898.21 428.94 905.92 440.48 910 443.75 C914.08 447.02 925.92 452.27 930 453 C934.08 453.73 942.08 452.39 945 450 C947.92 447.61 952.96 435.42 955 432.5 C957.04 429.58 959.58 426.31 962.5 425 C965.42 423.69 976.21 421.98 980 421.25 C983.79 420.52 991.5 422.1 995 418.75 C998.5 415.4 1005.8 397.9 1010 392.5 C1014.2 387.1 1027.03 377.93 1031 372.5 C1034.97 367.07 1040.62 350.38 1044 346 C1047.38 341.62 1055.95 337.33 1060 335 C1064.05 332.67 1074.67 326.29 1078.75 326 C1082.83 325.71 1091.35 330.75 1095 332.5 C1098.65 334.25 1105.92 339.83 1110 341 C1114.08 342.17 1126.21 342.56 1130 342.5 C1133.79 342.44 1139.58 340.09 1142.5 340.5 C1145.42 340.91 1150.19 345.36 1155 346 C1159.81 346.64 1180.4 346 1183.75 346" fill="none" stroke="#f0e000" stroke-width="1.2" stroke-linejoin="round" />
<path d="M22 209.75 C27.83 209.02 64.71 208.6 72 203.5 C79.29 198.4 80.3 174.02 84.5 166 C88.7 157.98 103.62 137.67 108 134.75 C112.38 131.83 118.91 137.65 122 141 C125.09 144.35 131.88 157.96 134.5 163.5 C137.12 169.04 141.88 183.69 144.5 188.5 C147.12 193.31 153.94 202.71 157 204.75 C160.06 206.79 167.83 203.81 170.75 206 C173.67 208.19 179.17 218.37 182 223.5 C184.83 228.63 192.03 243.41 195 250 C197.97 256.59 204.47 273.47 207.5 280 C210.53 286.53 218.08 299.88 221 306 C223.92 312.12 228.53 323.17 232.5 332.5 C236.47 341.83 250.92 377.43 255 386 C259.08 394.57 264.58 403.2 267.5 406 C270.42 408.8 277.08 408.66 280 410 C282.92 411.34 289.88 415.17 292.5 417.5 C295.12 419.83 299.76 426.5 302.5 430 C305.24 433.5 312.79 444.88 316 447.5 C319.21 450.12 326.91 454.25 330 452.5 C333.09 450.75 339.58 436 342.5 432.5 C345.42 429 351.79 423.26 355 422.5 C358.21 421.74 367.08 424.45 370 426 C372.92 427.55 375.92 432.28 380 435.75 C384.08 439.22 400.62 452.98 405 455.75 C409.38 458.52 414.73 457.08 417.5 459.5 C420.27 461.92 424.67 474.02 428.75 476.5 C432.83 478.98 448.12 480.69 452.5 480.75 C456.88 480.81 463.04 477.32 466.25 477 C469.46 476.68 477.23 477.48 480 478 C482.77 478.52 487.38 481.18 490 481.5 C492.62 481.82 498.27 482 502.5 480.75 C506.73 479.5 521.58 471.07 526.25 470.75 C530.92 470.43 538.12 474.88 542.5 478 C546.88 481.12 559.67 495.87 563.75 497.5 C567.83 499.13 574.58 492.93 577.5 492 C580.42 491.07 586.12 491.4 588.75 489.5 C591.38 487.6 597.08 477.94 600 475.75 C602.92 473.56 610.25 473.08 613.75 470.75 C617.25 468.42 625.92 458.96 630 455.75 C634.08 452.54 644.96 447.13 648.75 443.25 C652.54 439.37 659.44 425.8 662.5 422.5 C665.56 419.2 672.38 415.52 675 415 C677.62 414.48 682.08 418.47 685 418 C687.92 417.53 697.08 411.88 700 411 C702.92 410.12 707.67 409.92 710 410.5 C712.33 411.08 717.08 414.83 720 416 C722.92 417.17 732.08 417.99 735 420.5 C737.92 423.01 742.67 433.18 745 437.5 C747.33 441.82 752.67 453.24 755 457.5 C757.33 461.76 761.5 468.46 765 474 C768.5 479.54 780.62 500.8 785 505 C789.38 509.2 798.42 507.38 802.5 510 C806.58 512.62 815.33 523.42 820 527.5 C824.67 531.58 836.67 542.43 842.5 545 C848.33 547.57 865.33 549.5 870 549.5 C874.67 549.5 879 544.83 882.5 545 C886 545.17 896.5 550.56 900 551 C903.5 551.44 908.42 548.92 912.5 548.75 C916.58 548.58 930.62 548.79 935 549.5 C939.38 550.21 947.14 553.35 950 554.8 C952.86 556.25 957.42 560.76 959.5 561.9 C961.58 563.04 964.89 564.28 967.8 564.6 C970.7 564.92 981.36 564.88 984.4 564.6 C987.44 564.32 991.41 561.48 993.9 562.2 C996.38 562.92 1001.14 569.8 1005.7 570.8 C1010.26 571.8 1028.65 570.25 1033 570.8 C1037.35 571.35 1040.23 576.75 1043 575.5 C1045.77 574.25 1053.71 563.69 1056.7 560.1 C1059.69 556.51 1064.87 550.65 1068.6 544.7 C1072.33 538.75 1085.93 513.94 1088.7 509.1 C1091.47 504.26 1090.36 506.25 1092.3 503.2 C1094.24 500.15 1102.53 486.25 1105.3 483 C1108.07 479.75 1111.95 476.35 1116 475.3 C1120.05 474.25 1135.45 475.26 1140 474 C1144.55 472.74 1151.79 465.55 1155 464.5 C1158.21 463.45 1164.15 464.65 1167.5 465 C1170.85 465.35 1181.85 467.21 1183.75 467.5" fill="none" stroke="#f0e000" stroke-width="1.2" stroke-linejoin="round" />
<path d="M22 213.75 C24.92 211.97 41.17 201.45 47 198.5 C52.83 195.55 66.17 190.69 72 188.5 C77.83 186.31 91.75 181.32 97 179.75 C102.25 178.18 107.67 175.55 117 175 C126.33 174.45 167.67 174.3 177 175 C186.33 175.7 191.98 179.28 197 181 C202.02 182.72 214.4 187.42 220 189.75 C225.6 192.08 239.75 197.94 245 201 C250.25 204.06 259.46 212.97 265 216 C270.54 219.03 285.5 223.38 292.5 227 C299.5 230.62 317.12 242.57 325 247 C332.88 251.43 353.29 261.27 360 265 C366.71 268.73 374.33 273.9 382.5 279 C390.67 284.1 420.08 303.38 430 308.75 C439.92 314.12 459.33 321.5 467.5 325 C475.67 328.5 493.29 336.48 500 338.75 C506.71 341.02 515.67 344 525 344.5 C534.33 345 569.79 342.65 580 343 C590.21 343.35 606.67 347.21 612.5 347.5 C618.33 347.79 625.04 345.5 630 345.5 C634.96 345.5 647.71 346.62 655 347.5 C662.29 348.38 684.62 352.07 692.5 353 C700.38 353.93 716.96 354.68 722.5 355.5 C728.04 356.32 734.46 357.78 740 360 C745.54 362.22 760.67 370.48 770 374.5 C779.33 378.52 808.33 390.07 820 394.5 C831.67 398.93 861.25 408.82 870 412.5 C878.75 416.18 889.17 423.38 895 426 C900.83 428.62 914.17 433.37 920 435 C925.83 436.63 935.96 439.3 945 440 C954.04 440.7 987 441.58 997.5 441 C1008 440.42 1026.25 436.75 1035 435 C1043.75 433.25 1063.75 427.46 1072.5 426 C1081.25 424.54 1101.54 422.97 1110 422.5 C1118.46 422.03 1138.88 421.8 1145 422 C1151.12 422.2 1157.98 423.99 1162.5 424.25 C1167.02 424.51 1181.27 424.25 1183.75 424.25" fill="none" stroke="#e00000" stroke-width="1.2" stroke-linejoin="round" />
<polyline points="926,502 1111,406 1172,495.5 1623.5,125.5" fill="none" stroke="#d028d8" stroke-width="1.1" stroke-linejoin="round" />
<line x1="969.5" y1="342.5" x2="969.5" y2="460" stroke="#2070c0" stroke-width="1.5" />
<path d="M119 150.55 L125 150.55 L122 144.15 Z" fill="#00ee00"/>
<path d="M134 178.3 L140 178.3 L137 171.9 Z" fill="#00ee00"/>
<path d="M148 206.3 L154 206.3 L151 199.9 Z" fill="#00ee00"/>
<path d="M179.5 232.3 L185.5 232.3 L182.5 225.9 Z" fill="#00ee00"/>
<path d="M195 263.8 L201 263.8 L198 257.4 Z" fill="#00ee00"/>
<path d="M205 286.8 L211 286.8 L208 280.4 Z" fill="#00ee00"/>
<path d="M218 311.8 L224 311.8 L221 305.4 Z" fill="#00ee00"/>
<path d="M229 338.8 L235 338.8 L232 332.4 Z" fill="#00ee00"/>
<path d="M254.5 398.8 L260.5 398.8 L257.5 392.4 Z" fill="#00ee00"/>
<path d="M379.5 443.8 L385.5 443.8 L382.5 437.4 Z" fill="#00ee00"/>
<path d="M391 455.3 L397 455.3 L394 448.9 Z" fill="#00ee00"/>
<path d="M400 463.8 L406 463.8 L403 457.4 Z" fill="#00ee00"/>
<path d="M426 484.8 L432 484.8 L429 478.4 Z" fill="#00ee00"/>
<path d="M437 486.8 L443 486.8 L440 480.4 Z" fill="#00ee00"/>
<path d="M452 487.8 L458 487.8 L455 481.4 Z" fill="#00ee00"/>
<path d="M721 426.8 L727 426.8 L724 420.4 Z" fill="#00ee00"/>
<path d="M736 436.8 L742 436.8 L739 430.4 Z" fill="#00ee00"/>
<path d="M752.75 467.8 L758.75 467.8 L755.75 461.4 Z" fill="#00ee00"/>
<path d="M762 483.3 L768 483.3 L765 476.9 Z" fill="#00ee00"/>
<path d="M771.5 496.8 L777.5 496.8 L774.5 490.4 Z" fill="#00ee00"/>
<path d="M784.5 513.8 L790.5 513.8 L787.5 507.4 Z" fill="#00ee00"/>
<path d="M880 552.8 L886 552.8 L883 546.4 Z" fill="#00ee00"/>
<path d="M897 557.3 L903 557.3 L900 550.9 Z" fill="#00ee00"/>
<path d="M905 555.8 L911 555.8 L908 549.4 Z" fill="#00ee00"/>
<path d="M1169 473.8 L1175 473.8 L1172 467.4 Z" fill="#00ee00"/>
<path d="M1175.75 473.8 L1181.75 473.8 L1178.75 467.4 Z" fill="#00ee00"/>
<path d="M216 239 L223 239 L219.5 246 Z" fill="#ff1010"/>
<path d="M514.5 368 L521.5 368 L518 375 Z" fill="#ff1010"/>
<path d="M523.5 374 L530.5 374 L527 381 Z" fill="#ff1010"/>
<path d="M538.5 357.5 L545.5 357.5 L542 364.5 Z" fill="#ff1010"/>
<path d="M552.25 330 L559.25 330 L555.75 337 Z" fill="#ff1010"/>
<path d="M573.5 299.5 L580.5 299.5 L577 306.5 Z" fill="#ff1010"/>
<path d="M1004 385.75 L1011 385.75 L1007.5 392.75 Z" fill="#ff1010"/>
<path d="M1042 335.75 L1049 335.75 L1045.5 342.75 Z" fill="#ff1010"/>
<rect x="461.5" y="477.5" width="7" height="7" fill="none" stroke="#33dd22" stroke-width="1.5"/>
<path d="M53 59 V56 H77 V59" fill="none" stroke="#1010e0" stroke-width="1.5"/>
<path d="M53 131.75 V134.75 H77.5 V131.75" fill="none" stroke="#1010e0" stroke-width="1.5"/>
<path d="M114.5 88.25 V85.25 H151.5 V88.25" fill="none" stroke="#1010e0" stroke-width="1.5"/>
<path d="M114.5 228.5 V231.5 H151.5 V228.5" fill="none" stroke="#1010e0" stroke-width="1.5"/>
<path d="M717 350.5 V347.5 H754.5 V350.5" fill="none" stroke="#1010e0" stroke-width="1.5"/>
<path d="M717 472.5 V475.5 H754.5 V472.5" fill="none" stroke="#1010e0" stroke-width="1.5"/>
<path d="M840.5 463.5 V460.5 H865.5 V463.5" fill="none" stroke="#1010e0" stroke-width="1.5"/>
<path d="M840.5 523 V526 H865.5 V523" fill="none" stroke="#1010e0" stroke-width="1.5"/>
<path d="M1000 386 V383 H1025.5 V386" fill="none" stroke="#1010e0" stroke-width="1.5"/>
<path d="M1000 473 V476 H1025.5 V473" fill="none" stroke="#1010e0" stroke-width="1.5"/>
<path d="M1025.5 340 V337 H1049.5 V340" fill="none" stroke="#1010e0" stroke-width="1.5"/>
<path d="M1025.5 425 V428 H1049.5 V425" fill="none" stroke="#1010e0" stroke-width="1.5"/>
<path d="M1074.5 348 V345 H1111 V348" fill="none" stroke="#1010e0" stroke-width="1.5"/>
<path d="M1074.5 438 V441 H1111 V438" fill="none" stroke="#1010e0" stroke-width="1.5"/>
<text x="64.5" y="51" fill="#1010e0" font-size="9.5" font-weight="normal" text-anchor="middle" >HP</text>
<text x="132" y="244" fill="#1010e0" font-size="9.5" font-weight="normal" text-anchor="middle" >ItC</text>
<text x="735" y="489" fill="#1010e0" font-size="9.5" font-weight="normal" text-anchor="middle" >ItC</text>
<text x="852" y="456" fill="#1010e0" font-size="9.5" font-weight="normal" text-anchor="middle" >EP</text>
<text x="1011" y="489" fill="#1010e0" font-size="9.5" font-weight="normal" text-anchor="middle" >HP</text>
<text x="1037" y="332" fill="#1010e0" font-size="9.5" font-weight="normal" text-anchor="middle" >EP</text>
<text x="1092.5" y="453" fill="#1010e0" font-size="9.5" font-weight="normal" text-anchor="middle" >ItC</text>
<text x="1008" y="684" fill="#33dd22" font-size="10" font-weight="normal" text-anchor="start" >38,2%</text>
<text x="1260" y="684" fill="#33dd22" font-size="10" font-weight="normal" text-anchor="start" >50%</text>
<text x="1596" y="664" fill="#33dd22" font-size="10" font-weight="normal" text-anchor="start" >61,8%</text>
</g>
<rect x="27" y="31" width="12" height="12" fill="#8c8c8c" stroke="#333" stroke-width="1"/>
<path d="M31 33.5 h3 v2 h-3 z M30 36.5 h4 v4 h1.5 v1.5 h-5.5 v-1.5 h1.5 v-2.5 h-1.5 z" fill="#ffee00" stroke="#000" stroke-width="0.6"/>
<rect x="27" y="47" width="12" height="12" fill="#8c8c8c" stroke="#333" stroke-width="1"/>
<path d="M28.5 49.5 H37.5 L34 53.5 V57 H32 V53.5 Z" fill="#ee2020" stroke="#000" stroke-width="0.5"/>
<rect x="29" y="45" width="8" height="1.5" fill="#dd2020" />
<rect x="29" y="59.5" width="8" height="1.5" fill="#dd2020" />
<text x="43.5" y="41.5" fill="#e8e8e8" font-size="10" font-weight="normal" textLength="28.7" lengthAdjust="spacing">Open:</text>
<text x="75.8" y="41.5" fill="#ffffff" font-size="10" font-weight="bold" textLength="32.1" lengthAdjust="spacing">15,418</text>
<text x="115" y="41.5" fill="#e8e8e8" font-size="10" font-weight="normal" textLength="17.8" lengthAdjust="spacing">Tief:</text>
<text x="139.5" y="41.5" fill="#ffffff" font-size="10" font-weight="bold" textLength="32.1" lengthAdjust="spacing">15,250</text>
<text x="178.4" y="41.5" fill="#e8e8e8" font-size="10" font-weight="normal" textLength="26.2" lengthAdjust="spacing">Hoch:</text>
<text x="209.6" y="41.5" fill="#ffffff" font-size="10" font-weight="bold" textLength="32.1" lengthAdjust="spacing">15,950</text>
<text x="248" y="41.5" fill="#e8e8e8" font-size="10" font-weight="normal" textLength="20.4" lengthAdjust="spacing">Zeit:</text>
<text x="271.8" y="41.5" fill="#ffff10" font-size="9.6" font-weight="bold" textLength="41.8" lengthAdjust="spacing">21:16:16</text>
<text x="317" y="41.5" fill="#e8e8e8" font-size="9.6" font-weight="normal" textLength="31.6" lengthAdjust="spacing">Letzte:</text>
<text x="352.5" y="41.5" fill="#10a010" font-size="10" font-weight="bold" textLength="32.3" lengthAdjust="spacing">15,950</text>
<text x="43.5" y="57.5" fill="#e8e8e8" font-size="9.6" font-weight="normal" textLength="178.5" lengthAdjust="spacing">Korrektur fehlerhafter Ticks: (25%; 7%)</text>
<text x="1630" y="644.44" fill="#f0f0f0" font-size="10" font-weight="normal" text-anchor="start" >12</text>
<text x="1630" y="591.4" fill="#f0f0f0" font-size="10" font-weight="normal" text-anchor="start" >13</text>
<text x="1630" y="538.36" fill="#f0f0f0" font-size="10" font-weight="normal" text-anchor="start" >14</text>
<text x="1630" y="485.32" fill="#f0f0f0" font-size="10" font-weight="normal" text-anchor="start" >15</text>
<text x="1630" y="379.24" fill="#f0f0f0" font-size="10" font-weight="normal" text-anchor="start" >17</text>
<text x="1630" y="326.2" fill="#f0f0f0" font-size="10" font-weight="normal" text-anchor="start" >18</text>
<text x="1630" y="273.16" fill="#f0f0f0" font-size="10" font-weight="normal" text-anchor="start" >19</text>
<text x="1630" y="220.12" fill="#f0f0f0" font-size="10" font-weight="normal" text-anchor="start" >20</text>
<text x="1630" y="167.08" fill="#f0f0f0" font-size="10" font-weight="normal" text-anchor="start" >21</text>
<text x="1630" y="114.04" fill="#f0f0f0" font-size="10" font-weight="normal" text-anchor="start" >22</text>
<text x="1630" y="61" fill="#f0f0f0" font-size="10" font-weight="normal" text-anchor="start" >23</text>
<rect x="1627" y="425" width="52" height="13" fill="#0a7a0a" />
<text x="1630" y="435.5" fill="#ffffff" font-size="10" font-weight="normal" text-anchor="start" >15,950</text>
<rect x="22" y="684" width="1656" height="15" fill="#4d4d4d" />
<rect x="22" y="699" width="1656" height="1.5" fill="#a8a8a8" />
<rect x="22" y="684" width="1604" height="1" fill="#6a6a6a" />
<rect x="22" y="686" width="1" height="10" fill="#1a1a1a" />
<rect x="336" y="686" width="1" height="10" fill="#1a1a1a" />
<rect x="619" y="686" width="1" height="10" fill="#1a1a1a" />
<rect x="877" y="686" width="1" height="10" fill="#1a1a1a" />
<rect x="1504" y="686" width="1" height="10" fill="#1a1a1a" />
<rect x="1183" y="686" width="1" height="10" fill="#8a8a8a" />
<text x="22.6" y="696.2" fill="#f0f0f0" font-size="9.6" font-weight="normal" textLength="38.8" lengthAdjust="spacing">2009-05</text>
<text x="338" y="696.2" fill="#f0f0f0" font-size="9.6" font-weight="normal" textLength="38.8" lengthAdjust="spacing">2009-07</text>
<text x="621" y="696.2" fill="#f0f0f0" font-size="9.6" font-weight="normal" textLength="38.8" lengthAdjust="spacing">2009-08</text>
<text x="879" y="696.2" fill="#f0f0f0" font-size="9.6" font-weight="normal" textLength="38.8" lengthAdjust="spacing">2009-09</text>
<text x="1185" y="696.2" fill="#f0e000" font-size="9.6" font-weight="normal" textLength="98" lengthAdjust="spacing">2009-10-05 21:16:16</text>
<text x="1505" y="696.2" fill="#f0f0f0" font-size="9.6" font-weight="normal" textLength="38.8" lengthAdjust="spacing">2009-11</text>
<path d="M1668.2 18.5 v-2.5 a2.8 2.8 0 0 1 5.6 0 v2.5" fill="none" stroke="#eee" stroke-width="1.6"/>
<rect x="1666.8" y="18" width="8.4" height="6.5" fill="#cc1010" stroke="#eee" stroke-width="0.8" rx="1"/>
<rect x="1670.4" y="20" width="1.2" height="3" fill="#fff" />
<rect x="22" y="700.5" width="1604" height="13.5" fill="#4d4d4d" />
<rect x="1626" y="700.5" width="52" height="144.5" fill="#494949" />
<rect x="1626" y="700.5" width="1" height="144.5" fill="#7a7a7a" />
<rect x="22" y="714" width="1604" height="1" fill="#a8a8a8" />
<path d="M26 708.3 H38" stroke="#e8e8e8" stroke-width="1"/>
<rect x="27.7" y="706.3" width="1.6" height="5.5" fill="#4040ff" stroke="#e8e8e8" stroke-width="0.5"/>
<rect x="31.2" y="703.8" width="1.6" height="5.5" fill="#4040ff" stroke="#e8e8e8" stroke-width="0.5"/>
<rect x="34.7" y="702.3" width="1.6" height="5" fill="#4040ff" stroke="#e8e8e8" stroke-width="0.5"/>
<text x="41" y="711.3" fill="#ebb400" font-size="9.6" font-weight="normal" textLength="98" lengthAdjust="spacing">TRIX Indicator (15;9)</text>
<path d="M150.35 701.95 L155.7 707.3 L150.35 712.65 L145 707.3 Z" fill="#009a00" stroke="#e8e8e8" stroke-width="0.8"/>
<text x="158" y="711.3" fill="#dcdcdc" font-size="10" font-weight="normal" textLength="18" lengthAdjust="spacing">Info</text>
<path d="M187.8 702.1 L193 707.3 L187.8 712.5 L182.6 707.3 Z" fill="#ee0000" stroke="#e8e8e8" stroke-width="0.8"/>
<text x="195.7" y="711.3" fill="#dcdcdc" font-size="10" font-weight="normal" textLength="29.3" lengthAdjust="spacing">Signal</text>
<path d="M234 710.8 L240 710.8 L237 703.8 Z" fill="#00dd00" stroke="#fff" stroke-width="0.5"/>
<path d="M239 703.8 L245 703.8 L242 710.8 Z" fill="#ee0000" stroke="#fff" stroke-width="0.5"/>
<text x="248" y="711.3" fill="#dcdcdc" font-size="9.6" font-weight="normal" textLength="100" lengthAdjust="spacing">Kauf/Verkauf Signale</text>
<path d="M1666.5 707.5 v-2 a2.5 2.5 0 0 1 5 0" fill="none" stroke="#ccc" stroke-width="1"/>
<rect x="1668.5" y="707.5" width="6" height="5.5" fill="#303030" stroke="#ccc" stroke-width="0.8"/>
<rect x="22" y="715" width="1604" height="130" fill="#000" />
<rect x="22" y="715" width="44" height="130" fill="url(#dots)" />
<rect x="65" y="715" width="1" height="130" fill="#232823" opacity="0.9"/>
<rect x="336" y="715" width="284" height="130" fill="url(#dots)" />
<rect x="336" y="715" width="1" height="130" fill="#232823" opacity="0.9"/>
<rect x="619" y="715" width="1" height="130" fill="#232823" opacity="0.9"/>
<rect x="877" y="715" width="272" height="130" fill="url(#dots)" />
<rect x="877" y="715" width="1" height="130" fill="#232823" opacity="0.9"/>
<rect x="1148" y="715" width="1" height="130" fill="#232823" opacity="0.9"/>
<rect x="1504" y="715" width="122" height="130" fill="url(#dots)" />
<rect x="1504" y="715" width="1" height="130" fill="#232823" opacity="0.9"/>
<line x1="22" y1="720.5" x2="66" y2="720.5" stroke="#262a26" stroke-width="1" />
<line x1="66" y1="720.5" x2="336" y2="720.5" stroke="#1c1c1c" stroke-width="1" />
<line x1="336" y1="720.5" x2="620" y2="720.5" stroke="#262a26" stroke-width="1" />
<line x1="620" y1="720.5" x2="877" y2="720.5" stroke="#1c1c1c" stroke-width="1" />
<line x1="877" y1="720.5" x2="1149" y2="720.5" stroke="#262a26" stroke-width="1" />
<line x1="1149" y1="720.5" x2="1504" y2="720.5" stroke="#1c1c1c" stroke-width="1" />
<line x1="1504" y1="720.5" x2="1626" y2="720.5" stroke="#262a26" stroke-width="1" />
<line x1="22" y1="773.75" x2="1626" y2="773.75" stroke="#5a5a5a" stroke-width="1" />
<line x1="22" y1="825.5" x2="66" y2="825.5" stroke="#262a26" stroke-width="1" />
<line x1="66" y1="825.5" x2="336" y2="825.5" stroke="#1c1c1c" stroke-width="1" />
<line x1="336" y1="825.5" x2="620" y2="825.5" stroke="#262a26" stroke-width="1" />
<line x1="620" y1="825.5" x2="877" y2="825.5" stroke="#1c1c1c" stroke-width="1" />
<line x1="877" y1="825.5" x2="1149" y2="825.5" stroke="#262a26" stroke-width="1" />
<line x1="1149" y1="825.5" x2="1504" y2="825.5" stroke="#1c1c1c" stroke-width="1" />
<line x1="1504" y1="825.5" x2="1626" y2="825.5" stroke="#262a26" stroke-width="1" />
<g clip-path="url(#trixclip)">
<path d="M22 720.5 C24.92 720.73 41.9 721.74 47 722.5 C52.1 723.26 59.92 725.69 65.75 727 C71.58 728.31 89.85 732.17 97 733.75 C104.15 735.33 119.42 738.46 127 740.5 C134.58 742.54 153.83 748.83 162 751.25 C170.17 753.67 189.42 758.77 197 761.25 C204.58 763.73 220.58 770.02 227 772.5 C233.42 774.98 245.58 780.02 252 782.5 C258.42 784.98 275 791.48 282 793.75 C289 796.02 305.58 800.4 312 802 C318.42 803.6 330 806.22 337 807.5 C344 808.78 364.42 811.83 372 813 C379.58 814.17 393.83 816.62 402 817.5 C410.17 818.38 432.96 820.21 442 820.5 C451.04 820.79 470.75 820.35 479.5 820 C488.25 819.65 508.25 818.81 517 817.5 C525.75 816.19 545.75 811.23 554.5 808.75 C563.25 806.27 584.12 798.58 592 796.25 C599.88 793.92 614.71 790.35 622 788.75 C629.29 787.15 646.33 783.67 654.5 782.5 C662.67 781.33 684.71 779.39 692 778.75 C699.29 778.11 711.17 777.2 717 777 C722.83 776.8 736.17 776.36 742 777 C747.83 777.64 759.71 781.13 767 782.5 C774.29 783.87 795.75 787.35 804.5 788.75 C813.25 790.15 833.25 793.33 842 794.5 C850.75 795.67 871.04 797.67 879.5 798.75 C887.96 799.83 906.33 803.23 914.5 803.75 C922.67 804.27 940.46 804.12 949.5 803.25 C958.54 802.38 982.67 798.23 992 796.25 C1001.33 794.27 1020.75 788.73 1029.5 786.25 C1038.25 783.77 1059.71 777.13 1067 775 C1074.29 772.87 1086.17 769.23 1092 768 C1097.83 766.77 1111.17 765.14 1117 764.5 C1122.83 763.86 1136.75 762.73 1142 762.5 C1147.25 762.27 1157.19 762.27 1162 762.5 C1166.81 762.73 1180.77 764.27 1183.25 764.5" fill="none" stroke="#0a9a0a" stroke-width="1.3" stroke-linejoin="round" />
<path d="M22 730.5 C24.92 730.79 42.04 731.89 47 733 C51.96 734.11 57.79 737.58 64.5 740 C71.21 742.42 96.62 750.69 104.5 753.75 C112.38 756.81 127.04 763.62 132 766.25 C136.96 768.88 143.5 774.41 147 776.25 C150.5 778.09 157.92 780.54 162 782 C166.08 783.46 176.17 786.21 182 788.75 C187.83 791.29 205.58 800.4 212 803.75 C218.42 807.1 231.75 814.73 237 817.5 C242.25 820.27 252.33 825.31 257 827.5 C261.67 829.69 272.33 834.94 277 836.25 C281.67 837.56 292.33 838.25 297 838.75 C301.67 839.25 312.33 840.59 317 840.5 C321.67 840.41 332.04 838.79 337 838 C341.96 837.21 354.83 834.33 359.5 833.75 C364.17 833.17 372.04 832.94 377 833 C381.96 833.06 394.42 834.54 402 834.25 C409.58 833.96 432.96 832.02 442 830.5 C451.04 828.98 472.21 823.35 479.5 821.25 C486.79 819.15 497.79 815.56 504.5 812.5 C511.21 809.44 531.17 798.5 537 795 C542.83 791.5 551 785.12 554.5 782.5 C558 779.88 563.5 774.83 567 772.5 C570.5 770.17 580.42 764.19 584.5 762.5 C588.58 760.81 597.04 758.82 602 758 C606.96 757.18 621.46 755.85 627 755.5 C632.54 755.15 643.38 754.18 649.5 755 C655.62 755.82 673.08 761.04 679.5 762.5 C685.92 763.96 698.67 766.33 704.5 767.5 C710.33 768.67 724.83 771.33 729.5 772.5 C734.17 773.67 740.12 775.46 744.5 777.5 C748.88 779.54 762.04 787.23 767 790 C771.96 792.77 782.62 799.35 787 801.25 C791.38 803.15 798.08 804.65 804.5 806.25 C810.92 807.85 833.54 813.83 842 815 C850.46 816.17 869.42 815.81 877 816.25 C884.58 816.69 901.46 818.66 907 818.75 C912.54 818.84 920.42 817.88 924.5 817 C928.58 816.12 938.5 812.94 942 811.25 C945.5 809.56 951 805.04 954.5 802.5 C958 799.96 966.46 793 972 789.5 C977.54 786 994.42 776.58 1002 772.5 C1009.58 768.42 1029.42 758.44 1037 754.5 C1044.58 750.56 1060.88 741.08 1067 738.75 C1073.12 736.42 1082.5 733.62 1089.5 734.5 C1096.5 735.38 1120.58 744.38 1127 746.25 C1133.42 748.12 1139.83 748.75 1144.5 750.5 C1149.17 752.25 1162.48 759.5 1167 761.25 C1171.52 763 1181.35 765 1183.25 765.5" fill="none" stroke="#ee1010" stroke-width="1.3" stroke-linejoin="round" />
<path d="M477 827.8 L483 827.8 L480 821.4 Z" fill="#00ee00"/>
<path d="M951.5 810.3 L957.5 810.3 L954.5 803.9 Z" fill="#00ee00"/>
<path d="M741 770.75 L748 770.75 L744.5 777.75 Z" fill="#ff1010"/>
<path d="M1175.25 756.5 L1182.25 756.5 L1178.75 763.5 Z" fill="#ff1010"/>
</g>
<text x="1629.5" y="724" fill="#f0f0f0" font-size="10" font-weight="normal" text-anchor="start" >1</text>
<text x="1629.5" y="777.5" fill="#f0f0f0" font-size="10" font-weight="bold" text-anchor="start" >0</text>
<text x="1629.5" y="829.5" fill="#f0f0f0" font-size="10" font-weight="normal" text-anchor="start" >-1</text>
<rect x="22" y="845" width="1656" height="3" fill="#a8a8a8" />
<rect x="22" y="848" width="1604" height="13.5" fill="#4d4d4d" />
<rect x="1626" y="848" width="52" height="116.5" fill="#494949" />
<rect x="1626" y="848" width="1" height="116.5" fill="#7a7a7a" />
<rect x="22" y="861" width="1604" height="1" fill="#a8a8a8" />
<path d="M26 855.8 H38" stroke="#e8e8e8" stroke-width="1"/>
<rect x="27.7" y="853.8" width="1.6" height="5.5" fill="#4040ff" stroke="#e8e8e8" stroke-width="0.5"/>
<rect x="31.2" y="851.3" width="1.6" height="5.5" fill="#4040ff" stroke="#e8e8e8" stroke-width="0.5"/>
<rect x="34.7" y="849.8" width="1.6" height="5" fill="#4040ff" stroke="#e8e8e8" stroke-width="0.5"/>
<text x="40.5" y="858.8" fill="#ebb400" font-size="9.6" font-weight="normal" textLength="149.2" lengthAdjust="spacing">MACD Indicator (Close;12;26;9)</text>
<path d="M200.5 849.3 L206 854.8 L200.5 860.3 L195 854.8 Z" fill="#8888ee" stroke="#e8e8e8" stroke-width="0.8"/>
<text x="208" y="858.8" fill="#dcdcdc" font-size="9.6" font-weight="normal" textLength="55" lengthAdjust="spacing">Histogramm</text>
<path d="M275.3 849.1 L281 854.8 L275.3 860.5 L269.6 854.8 Z" fill="#ee0000" stroke="#e8e8e8" stroke-width="0.8"/>
<text x="283" y="858.8" fill="#dcdcdc" font-size="10" font-weight="normal" textLength="30.4" lengthAdjust="spacing">Signal</text>
<path d="M325.35 849.15 L331 854.8 L325.35 860.45 L319.7 854.8 Z" fill="#009a00" stroke="#e8e8e8" stroke-width="0.8"/>
<text x="333" y="858.8" fill="#dcdcdc" font-size="10" font-weight="normal" textLength="17" lengthAdjust="spacing">Info</text>
<path d="M359 858.3 L365 858.3 L362 851.3 Z" fill="#00dd00" stroke="#fff" stroke-width="0.5"/>
<path d="M364 851.3 L370 851.3 L367 858.3 Z" fill="#ee0000" stroke="#fff" stroke-width="0.5"/>
<text x="373" y="858.8" fill="#dcdcdc" font-size="9.6" font-weight="normal" textLength="99" lengthAdjust="spacing">Kauf/Verkauf Signale</text>
<path d="M1666.5 854.5 v-2 a2.5 2.5 0 0 1 5 0" fill="none" stroke="#ccc" stroke-width="1"/>
<rect x="1668.5" y="854.5" width="6" height="5.5" fill="#303030" stroke="#ccc" stroke-width="0.8"/>
<rect x="22" y="862" width="1604" height="102.3" fill="#000" />
<rect x="22" y="862" width="44" height="102.3" fill="url(#dots)" />
<rect x="65" y="862" width="1" height="102.3" fill="#232823" opacity="0.9"/>
<rect x="336" y="862" width="284" height="102.3" fill="url(#dots)" />
<rect x="336" y="862" width="1" height="102.3" fill="#232823" opacity="0.9"/>
<rect x="619" y="862" width="1" height="102.3" fill="#232823" opacity="0.9"/>
<rect x="877" y="862" width="272" height="102.3" fill="url(#dots)" />
<rect x="877" y="862" width="1" height="102.3" fill="#232823" opacity="0.9"/>
<rect x="1148" y="862" width="1" height="102.3" fill="#232823" opacity="0.9"/>
<rect x="1504" y="862" width="122" height="102.3" fill="url(#dots)" />
<rect x="1504" y="862" width="1" height="102.3" fill="#232823" opacity="0.9"/>
<line x1="22" y1="956.5" x2="66" y2="956.5" stroke="#262a26" stroke-width="1" />
<line x1="66" y1="956.5" x2="336" y2="956.5" stroke="#1c1c1c" stroke-width="1" />
<line x1="336" y1="956.5" x2="620" y2="956.5" stroke="#262a26" stroke-width="1" />
<line x1="620" y1="956.5" x2="877" y2="956.5" stroke="#1c1c1c" stroke-width="1" />
<line x1="877" y1="956.5" x2="1149" y2="956.5" stroke="#262a26" stroke-width="1" />
<line x1="1149" y1="956.5" x2="1504" y2="956.5" stroke="#1c1c1c" stroke-width="1" />
<line x1="1504" y1="956.5" x2="1626" y2="956.5" stroke="#262a26" stroke-width="1" />
<g clip-path="url(#macdclip)">
<path d="M22 904.5 L22 917 C24.92 917.06 39.71 918.46 47 917.5 C54.29 916.54 75.75 909.19 84.5 908.75 C93.25 908.31 114.12 912.58 122 913.75 C129.88 914.92 143.25 918.02 152 918.75 C160.75 919.48 186.5 919.12 197 920 C207.5 920.88 233.83 925.32 242 926.25 C250.17 927.18 260.58 928.88 267 928 C273.42 927.12 288.83 920.41 297 918.75 C305.17 917.09 329.12 915.41 337 913.75 C344.88 912.09 358.08 906.1 364.5 904.5 C370.92 902.9 385.88 901.11 392 900 C398.12 898.89 411.17 895.52 417 895 C422.83 894.48 435.58 895.56 442 895.5 C448.42 895.44 464.12 894.62 472 894.5 C479.88 894.38 501.33 894.88 509.5 894.5 C517.67 894.12 534.71 891.98 542 891.25 C549.29 890.52 564.71 888.45 572 888.25 C579.29 888.05 597.5 889.24 604.5 889.5 C611.5 889.76 624.71 889.71 632 890.5 C639.29 891.29 658.83 894.56 667 896.25 C675.17 897.94 695.58 903.25 702 905 C708.42 906.75 715.58 909.94 722 911.25 C728.42 912.56 750 915.23 757 916.25 C764 917.27 775 919.71 782 920 C789 920.29 810 919.04 817 918.75 C824 918.46 836.17 917.79 842 917.5 C847.83 917.21 858.25 917.62 867 916.25 C875.75 914.88 905.33 908.29 917 905.75 C928.67 903.21 956.79 896.19 967 894.5 C977.21 892.81 995.17 892.45 1004.5 891.25 C1013.83 890.05 1038.54 885.07 1047 884.25 C1055.46 883.43 1070.29 883 1077 884.25 C1083.71 885.5 1096.92 892.93 1104.5 895 C1112.08 897.07 1135.29 900.45 1142 902 C1148.71 903.55 1157.19 907.23 1162 908.25 C1166.81 909.27 1180.77 910.46 1183.25 910.75 L1183.25 904.5 Z" fill="#46468a"/>
<path d="M22 917 C24.92 917.06 39.71 918.46 47 917.5 C54.29 916.54 75.75 909.19 84.5 908.75 C93.25 908.31 114.12 912.58 122 913.75 C129.88 914.92 143.25 918.02 152 918.75 C160.75 919.48 186.5 919.12 197 920 C207.5 920.88 233.83 925.32 242 926.25 C250.17 927.18 260.58 928.88 267 928 C273.42 927.12 288.83 920.41 297 918.75 C305.17 917.09 329.12 915.41 337 913.75 C344.88 912.09 358.08 906.1 364.5 904.5 C370.92 902.9 385.88 901.11 392 900 C398.12 898.89 411.17 895.52 417 895 C422.83 894.48 435.58 895.56 442 895.5 C448.42 895.44 464.12 894.62 472 894.5 C479.88 894.38 501.33 894.88 509.5 894.5 C517.67 894.12 534.71 891.98 542 891.25 C549.29 890.52 564.71 888.45 572 888.25 C579.29 888.05 597.5 889.24 604.5 889.5 C611.5 889.76 624.71 889.71 632 890.5 C639.29 891.29 658.83 894.56 667 896.25 C675.17 897.94 695.58 903.25 702 905 C708.42 906.75 715.58 909.94 722 911.25 C728.42 912.56 750 915.23 757 916.25 C764 917.27 775 919.71 782 920 C789 920.29 810 919.04 817 918.75 C824 918.46 836.17 917.79 842 917.5 C847.83 917.21 858.25 917.62 867 916.25 C875.75 914.88 905.33 908.29 917 905.75 C928.67 903.21 956.79 896.19 967 894.5 C977.21 892.81 995.17 892.45 1004.5 891.25 C1013.83 890.05 1038.54 885.07 1047 884.25 C1055.46 883.43 1070.29 883 1077 884.25 C1083.71 885.5 1096.92 892.93 1104.5 895 C1112.08 897.07 1135.29 900.45 1142 902 C1148.71 903.55 1157.19 907.23 1162 908.25 C1166.81 909.27 1180.77 910.46 1183.25 910.75" fill="none" stroke="#8585ee" stroke-width="1.2" stroke-linejoin="round" />
<line x1="22" y1="904.5" x2="1626" y2="904.5" stroke="#6a6a3a" stroke-width="1" />
<path d="M22 865.5 C27.83 866.75 60.33 873.98 72 876.25 C83.67 878.52 110.33 882.96 122 885 C133.67 887.04 162.67 891.56 172 893.75 C181.33 895.94 193.83 900.98 202 903.75 C210.17 906.52 233.83 914.44 242 917.5 C250.17 920.56 265.58 927.52 272 930 C278.42 932.48 291.17 936.71 297 938.75 C302.83 940.79 316.17 945.6 322 947.5 C327.83 949.4 341.17 953.98 347 955 C352.83 956.02 366.17 956.1 372 956.25 C377.83 956.4 388.83 956.98 397 956.25 C405.17 955.52 430.92 951.9 442 950 C453.08 948.1 480.33 942.33 492 940 C503.67 937.67 530.33 932.92 542 930 C553.67 927.08 581.5 918.21 592 915 C602.5 911.79 623.83 904.77 632 902.5 C640.17 900.23 654.12 897.02 662 895.5 C669.88 893.98 690.75 890.14 699.5 889.5 C708.25 888.86 727.67 889.07 737 890 C746.33 890.93 770.17 895.17 779.5 897.5 C788.83 899.83 809.71 907.67 817 910 C824.29 912.33 834.71 915.52 842 917.5 C849.29 919.48 870.75 925.25 879.5 927 C888.25 928.75 908.83 931.77 917 932.5 C925.17 933.23 940.75 933.89 949.5 933.25 C958.25 932.61 981.21 929.27 992 927 C1002.79 924.73 1030.33 917.48 1042 913.75 C1053.67 910.02 1080.33 898.59 1092 895 C1103.67 891.41 1131.35 884.46 1142 883 C1152.65 881.54 1178.44 882.56 1183.25 882.5" fill="none" stroke="#ee1010" stroke-width="1.3" stroke-linejoin="round" />
<path d="M22 878.75 C24.92 879.42 39.42 883.92 47 884.5 C54.58 885.08 79.42 883.25 87 883.75 C94.58 884.25 105 886.56 112 888.75 C119 890.94 136.5 899 147 902.5 C157.5 906 193.25 916.12 202 918.75 C210.75 921.38 216.75 922.52 222 925 C227.25 927.48 241.17 936.94 247 940 C252.83 943.06 266.75 949.85 272 951.25 C277.25 952.65 287.04 951.12 292 952 C296.96 952.88 309.83 957.82 314.5 958.75 C319.17 959.68 326.17 960.29 332 960 C337.83 959.71 356.92 957.42 364.5 956.25 C372.08 955.08 390.88 951.46 397 950 C403.12 948.54 411.75 944.77 417 943.75 C422.25 942.73 433.25 942.85 442 941.25 C450.75 939.65 481.79 932.48 492 930 C502.21 927.52 519.29 923.21 529.5 920 C539.71 916.79 569.29 905.56 579.5 902.5 C589.71 899.44 609.71 895.41 617 893.75 C624.29 892.09 635.58 889.12 642 888.25 C648.42 887.38 665.29 886.19 672 886.25 C678.71 886.31 691.33 887 699.5 888.75 C707.67 890.5 731.79 897.9 742 901.25 C752.21 904.6 778.25 914.88 787 917.5 C795.75 920.12 810.58 922.29 817 923.75 C823.42 925.21 836.17 928.69 842 930 C847.83 931.31 859.71 934.42 867 935 C874.29 935.58 895.75 935.52 904.5 935 C913.25 934.48 933.25 932.4 942 930.5 C950.75 928.6 970.75 921.43 979.5 918.75 C988.25 916.07 1009.71 910.27 1017 907.5 C1024.29 904.73 1035.29 897.86 1042 895 C1048.71 892.14 1068.67 884.66 1074.5 883 C1080.33 881.34 1084.12 881.01 1092 880.75 C1099.88 880.49 1133.83 880.11 1142 880.75 C1150.17 881.39 1157.19 885.46 1162 886.25 C1166.81 887.04 1180.77 887.35 1183.25 887.5" fill="none" stroke="#0a9a0a" stroke-width="1.3" stroke-linejoin="round" />
<path d="M361.5 962.8 L367.5 962.8 L364.5 956.4 Z" fill="#00ee00"/>
<path d="M920.25 940.3 L926.25 940.3 L923.25 933.9 Z" fill="#00ee00"/>
<path d="M697.25 882 L704.25 882 L700.75 889 Z" fill="#ff1010"/>
<path d="M1149 874.5 L1156 874.5 L1152.5 881.5 Z" fill="#ff1010"/>
</g>
<text x="1629.5" y="908" fill="#f0f0f0" font-size="10" font-weight="bold" text-anchor="start" >0</text>
<text x="1629.5" y="959.5" fill="#f0f0f0" font-size="10" font-weight="normal" text-anchor="start" >-2</text>
<rect x="22" y="964.3" width="1656" height="2.5" fill="#a8a8a8" />
<rect x="22" y="966.8" width="1604" height="5.2" fill="#4d4d4d" />
<rect x="1626" y="966.8" width="52" height="5.2" fill="#494949" />
<svg x="22" y="966.8" width="1604" height="5.2" overflow="hidden">
<g transform="translate(-22,-966.8)">
<path d="M26 972.8 H38" stroke="#e8e8e8" stroke-width="1"/>
<rect x="27.7" y="970.8" width="1.6" height="5.5" fill="#4040ff" stroke="#e8e8e8" stroke-width="0.5"/>
<rect x="31.2" y="968.3" width="1.6" height="5.5" fill="#4040ff" stroke="#e8e8e8" stroke-width="0.5"/>
<rect x="34.7" y="966.8" width="1.6" height="5" fill="#4040ff" stroke="#e8e8e8" stroke-width="0.5"/>
<text x="40.5" y="975.8" fill="#ebb400" font-size="9.6" font-weight="normal" textLength="97.2" lengthAdjust="spacing">Volume Price Trend</text>
<path d="M147.75 967.05 L152.5 971.8 L147.75 976.55 L143 971.8 Z" fill="#009a00" stroke="#e8e8e8" stroke-width="0.8"/>
<text x="155.5" y="975.8" fill="#dcdcdc" font-size="10" font-weight="normal" textLength="26" lengthAdjust="spacing">Trend</text>
</g></svg>
<rect x="22" y="972" width="1656" height="2" fill="#a8a8a8" />
<rect x="22" y="974" width="1604" height="13" fill="#4d4d4d" />
<rect x="1626" y="974" width="52" height="21" fill="#494949" />
<rect x="1626" y="974" width="1" height="21" fill="#7a7a7a" />
<path d="M26 981.5 H38" stroke="#e8e8e8" stroke-width="1"/>
<rect x="27.7" y="979.5" width="1.6" height="5.5" fill="#4040ff" stroke="#e8e8e8" stroke-width="0.5"/>
<rect x="31.2" y="977" width="1.6" height="5.5" fill="#4040ff" stroke="#e8e8e8" stroke-width="0.5"/>
<rect x="34.7" y="975.5" width="1.6" height="5" fill="#4040ff" stroke="#e8e8e8" stroke-width="0.5"/>
<text x="40.5" y="984.5" fill="#ebb400" font-size="9.6" font-weight="normal" textLength="131.5" lengthAdjust="spacing">Negative Volume Index (90)</text>
<path d="M183.35 975.85 L188 980.5 L183.35 985.15 L178.7 980.5 Z" fill="#009a00" stroke="#e8e8e8" stroke-width="0.8"/>
<text x="192" y="984.5" fill="#dcdcdc" font-size="10" font-weight="normal" textLength="25.6" lengthAdjust="spacing">Trend</text>
<path d="M223 977.5 H235.7 M223 983.5 H235.7" stroke="#e0e0e0" stroke-width="1"/>
<rect x="223" y="976.2" width="2.6" height="2.6" fill="#9090ff" />
<rect x="233.1" y="976.2" width="2.6" height="2.6" fill="#9090ff" />
<rect x="223" y="982.2" width="2.6" height="2.6" fill="#9090ff" />
<rect x="233.1" y="982.2" width="2.6" height="2.6" fill="#9090ff" />
<text x="237.6" y="984.5" fill="#dcdcdc" font-size="9.6" font-weight="normal" textLength="110.4" lengthAdjust="spacing">Zwei horizontale Linien</text>
<path d="M360 975.5 L365 980.5 L360 985.5 L355 980.5 Z" fill="#ee1493" stroke="#e8e8e8" stroke-width="0.8"/>
<text x="368" y="984.5" fill="#dcdcdc" font-size="9.6" font-weight="normal" textLength="75.6" lengthAdjust="spacing">Moving Average</text>
<path d="M1666.5 980 v-2 a2.5 2.5 0 0 1 5 0" fill="none" stroke="#ccc" stroke-width="1"/>
<rect x="1668.5" y="980" width="6" height="5.5" fill="#303030" stroke="#ccc" stroke-width="0.8"/>
<rect x="22" y="987" width="1604" height="1" fill="#a8a8a8" />
<rect x="22" y="988" width="1604" height="7" fill="#000" />
<rect x="22" y="988" width="44" height="7" fill="url(#dots)" />
<rect x="65" y="988" width="1" height="7" fill="#232823" opacity="0.9"/>
<rect x="336" y="988" width="284" height="7" fill="url(#dots)" />
<rect x="336" y="988" width="1" height="7" fill="#232823" opacity="0.9"/>
<rect x="619" y="988" width="1" height="7" fill="#232823" opacity="0.9"/>
<rect x="877" y="988" width="272" height="7" fill="url(#dots)" />
<rect x="877" y="988" width="1" height="7" fill="#232823" opacity="0.9"/>
<rect x="1148" y="988" width="1" height="7" fill="#232823" opacity="0.9"/>
<rect x="1504" y="988" width="122" height="7" fill="url(#dots)" />
<rect x="1504" y="988" width="1" height="7" fill="#232823" opacity="0.9"/>
<rect x="22" y="988" width="1161" height="1.5" fill="#e8108a" />
<rect x="22" y="993" width="1604" height="1.5" fill="#1a6a9a" />
<rect x="22" y="994.5" width="1604" height="1.5" fill="#3a0808" />
<rect x="22" y="996" width="1604" height="14" fill="#b9b9bd" />
<rect x="22" y="996" width="14.5" height="14" fill="#f2f2f2" stroke="#8a1010" stroke-width="1"/>
<path d="M31.5 999.5 L26.5 1003 L31.5 1006.5 Z" fill="#8a1010"/>
<rect x="1316.5" y="996" width="165" height="14" fill="#ececf2" stroke="#8a3a2a" stroke-width="1"/>
<path d="M1395 1000 V1006 M1398.5 1000 V1006 M1402 1000 V1006" stroke="#9a2a10" stroke-width="1.2"/>
<rect x="1612" y="996" width="14.5" height="14" fill="#f2f2f2" stroke="#8a1010" stroke-width="1"/>
<path d="M1617 999.5 L1622 1003 L1617 1006.5 Z" fill="#8a1010"/>
<rect x="1626.5" y="995" width="51.5" height="15" fill="#c8c8c8" />
<circle cx="1634.5" cy="1001.5" r="3.8" fill="#f8f8f8" stroke="#111" stroke-width="1"/>
<path d="M1637.3 1004.3 L1640 1007.5" stroke="#c8a000" stroke-width="2"/>
<path d="M1632.5 1001.5 H1636.5 M1634.5 999.5 V1003.5" stroke="#111" stroke-width="0.9"/>
<circle cx="1651.5" cy="1001.5" r="3.8" fill="#f8f8f8" stroke="#111" stroke-width="1"/>
<path d="M1654.3 1004.3 L1657 1007.5" stroke="#c8a000" stroke-width="2"/>
<path d="M1649.5 1001.5 H1653.5" stroke="#111" stroke-width="0.9"/>
<circle cx="1669.5" cy="1001.5" r="3.8" fill="#f8f8f8" stroke="#111" stroke-width="1"/>
<path d="M1672.3 1004.3 L1675 1007.5" stroke="#c8a000" stroke-width="2"/>
<rect x="0" y="1010" width="1681" height="2" fill="#ff6a00" />
</svg>
</body></html>
